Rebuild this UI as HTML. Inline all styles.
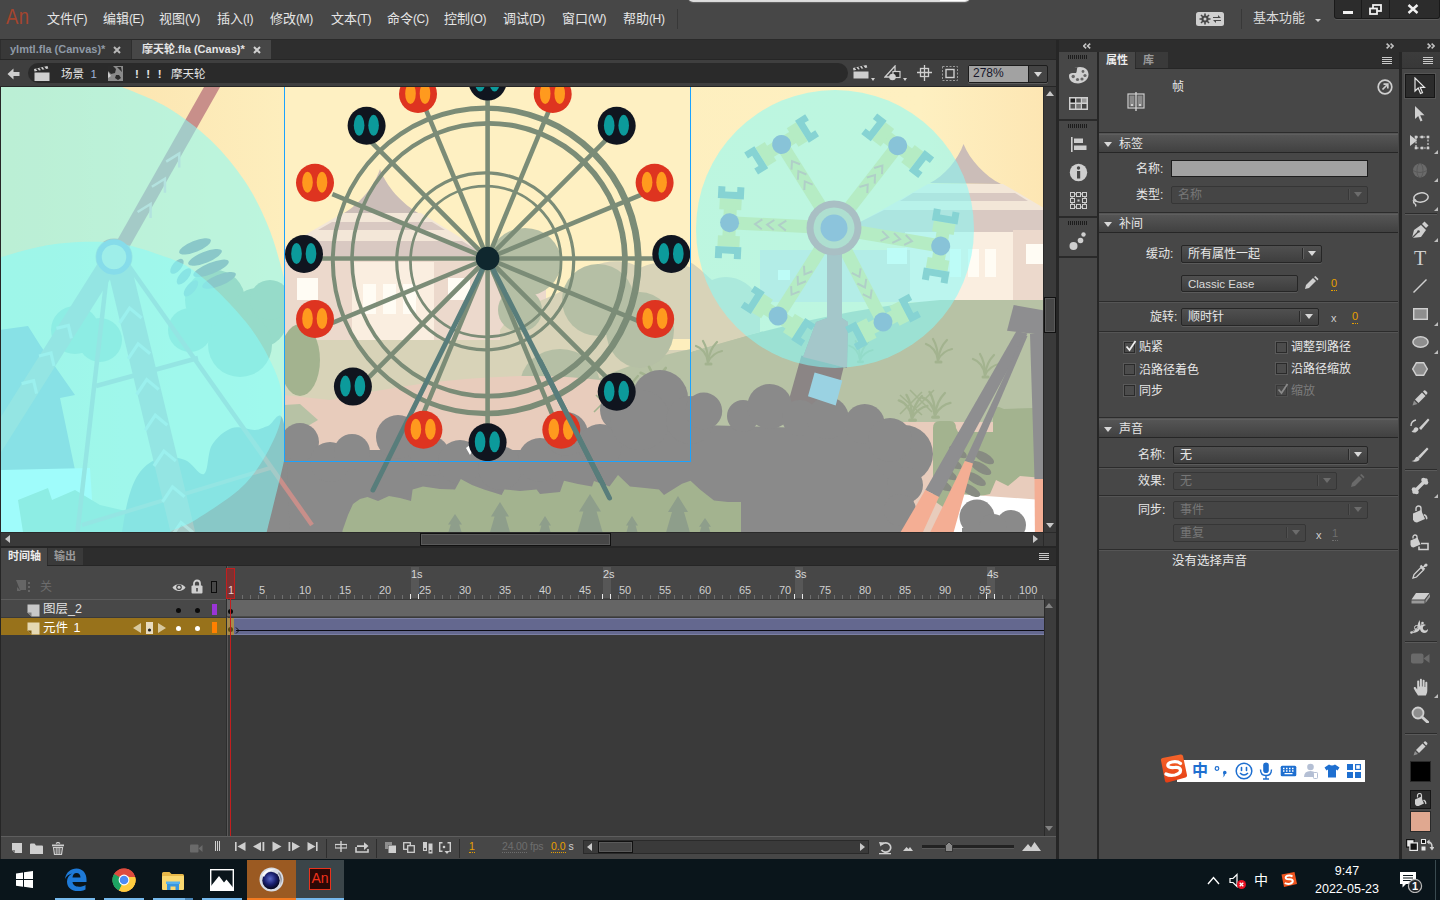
<!DOCTYPE html>
<html lang="zh-CN">
<head>
<meta charset="utf-8">
<title>Adobe Animate</title>
<style>
*{box-sizing:border-box;margin:0;padding:0}
html,body{width:1440px;height:900px;overflow:hidden;background:#2a2a2a}
body{font-family:"Liberation Sans","Noto Sans CJK SC",sans-serif;font-size:12px;color:#e0e0e0;position:relative}
.abs{position:absolute}
#app{position:absolute;left:0;top:0;width:1440px;height:900px;overflow:hidden;background:#262626}
/* menu bar */
#menubar{left:0;top:0;width:1440px;height:40px;background:#474747;border-bottom:1px solid #2a2a2a}
#menubar .mi{position:absolute;top:11px;font-size:13px;color:#e6e6e6;white-space:nowrap;line-height:16px}
#logo{position:absolute;left:6px;top:5px;font-size:21.5px;line-height:24px;color:#a5452e;letter-spacing:0.5px;transform:scaleX(0.86);transform-origin:0 0}
#menubar .mi .k{font-size:12px;letter-spacing:-0.4px}
/* doc tabs */
#tabbar{left:0;top:40px;width:1056px;height:20px;background:#2e2e2e;border-bottom:1px solid #262626}
.dtab{position:absolute;top:0;height:19px;font-size:11px;line-height:19px;font-weight:bold;white-space:nowrap}
/* edit bar */
#editbar{left:0;top:60px;width:1056px;height:27px;background:#3f3f3f;border-bottom:1px solid #262626}
#crumb{position:absolute;left:28px;top:3px;width:820px;height:20px;border-radius:10px;background:#2a2a2a}
/* stage */
#stage{left:1px;top:87px;width:1042px;height:445px;overflow:hidden;background:#fdeebd}
/* generic panel */
.panel{background:#474747}
.sect{position:absolute;left:0;width:299px;height:19px;background:linear-gradient(#555,#414141);border-top:1px solid #5e5e5e;border-bottom:1px solid #262626}
.lbl{position:absolute;white-space:nowrap;font-size:12px;line-height:14px;color:#e6e6e6}
.dim{color:#7c7c7c}
.dd{position:absolute;height:17px;border:1px solid #262626;border-radius:2px;background:linear-gradient(#505050,#3e3e3e);box-shadow:0 1px 0 #5a5a5a}
.dd.off{background:#454545;border-color:#363636;box-shadow:none}
.dd .t{position:absolute;left:6px;top:1px;font-size:12px;line-height:15px;color:#e8e8e8;white-space:nowrap}
.dd.off .t{color:#777}
.dd .sep{position:absolute;right:18px;top:2px;width:1px;height:11px;background:#2a2a2a;box-shadow:1px 0 0 #606060}
.dd .ar{position:absolute;right:5px;top:5px;width:0;height:0;border-left:4px solid transparent;border-right:4px solid transparent;border-top:5px solid #d8d8d8}
.dd.off .ar{border-top-color:#6c6c6c}
.dd.off .sep{background:#383838;box-shadow:1px 0 0 #505050}
.cb{position:absolute;width:11px;height:11px;border:1px solid #2a2a2a;background:#4c4c4c;box-shadow:0 0 0 1px #5a5a5a}
.hline{position:absolute;left:0;width:299px;height:2px;background:#2c2c2c;border-bottom:1px solid #555}
.tri-u{width:0;height:0;border-left:4px solid transparent;border-right:4px solid transparent;border-bottom:5px solid #c8c8c8}
.tri-d{width:0;height:0;border-left:4px solid transparent;border-right:4px solid transparent;border-top:5px solid #c8c8c8}
.tri-l{width:0;height:0;border-top:4px solid transparent;border-bottom:4px solid transparent;border-right:5px solid #c8c8c8}
.tri-r{width:0;height:0;border-top:4px solid transparent;border-bottom:4px solid transparent;border-left:5px solid #c8c8c8}
.menuic{width:10px;height:7px;background:linear-gradient(#c8c8c8 0 1px,transparent 1px 2px,#c8c8c8 2px 3px,transparent 3px 4px,#c8c8c8 4px 5px,transparent 5px 6px,#c8c8c8 6px 7px)}

</style>
</head>
<body>
<div id="app">

<!-- MENUBAR -->
<div id="menubar" class="abs">
  <div id="logo">An</div>
  <div class="mi" style="left:47px">文件<span class="k">(F)</span></div>
  <div class="mi" style="left:103px">编辑<span class="k">(E)</span></div>
  <div class="mi" style="left:159px">视图<span class="k">(V)</span></div>
  <div class="mi" style="left:217px">插入<span class="k">(I)</span></div>
  <div class="mi" style="left:270px">修改<span class="k">(M)</span></div>
  <div class="mi" style="left:331px">文本<span class="k">(T)</span></div>
  <div class="mi" style="left:387px">命令<span class="k">(C)</span></div>
  <div class="mi" style="left:444px">控制<span class="k">(O)</span></div>
  <div class="mi" style="left:503px">调试<span class="k">(D)</span></div>
  <div class="mi" style="left:562px">窗口<span class="k">(W)</span></div>
  <div class="mi" style="left:623px">帮助<span class="k">(H)</span></div>
  <div class="abs" style="left:677px;top:9px;width:1px;height:20px;background:#383838"></div>
<div class="abs" style="left:688px;top:-8px;width:282px;height:10px;background:linear-gradient(#fff,#d8d8d8);border-radius:0 0 5px 5px;box-shadow:0 1px 1px #666"></div>
<div class="abs" style="left:940px;top:-8px;width:28px;height:9px;background:#fff;border-radius:0 0 4px 0"></div>
<svg class="abs" style="left:1196px;top:12px" width="28" height="14" viewBox="0 0 28 14"><rect x="0" y="0" width="28" height="14" rx="2.5" fill="#cfcfcf"/><circle cx="9" cy="7" r="3.6" fill="#474747"/><path d="M9,1.5v11M3.5,7h11M5,3l8,8M13,3l-8,8" stroke="#474747" stroke-width="1.6"/><circle cx="9" cy="7" r="1.5" fill="#cfcfcf"/><path d="M17,5h5v-2l3,3h-8z M25,9h-5v2l-3,-3h8z" fill="#474747"/></svg>
<div class="abs" style="left:1241px;top:9px;width:1px;height:20px;background:#383838"></div>
<div class="mi" style="left:1253px;top:10px;font-size:13px;color:#dcdcdc">基本功能</div>
<div class="abs" style="left:1315px;top:19px;width:0;height:0;border-left:3px solid transparent;border-right:3px solid transparent;border-top:3px solid #d0d0d0"></div>
<div class="abs" style="left:1334px;top:0;width:106px;height:19px;background:#2c2c2c;border:1px solid #1a1a1a;border-top:0;border-radius:0 0 3px 3px;box-shadow:0 1px 0 #5a5a5a"></div>
<div class="abs" style="left:1361px;top:0;width:1px;height:18px;background:#1a1a1a"></div><div class="abs" style="left:1389px;top:0;width:1px;height:18px;background:#1a1a1a"></div>
<div class="abs" style="left:1343px;top:11px;width:10px;height:3px;background:#f0f0f0"></div>
<svg class="abs" style="left:1369px;top:4px" width="13" height="11" viewBox="0 0 13 11"><rect x="4" y="1" width="8" height="6" fill="none" stroke="#f0f0f0" stroke-width="1.8"/><rect x="1" y="4.5" width="7" height="5.5" fill="#2c2c2c" stroke="#f0f0f0" stroke-width="1.8"/></svg>
<svg class="abs" style="left:1407px;top:4px" width="12" height="10" viewBox="0 0 12 10"><path d="M1.5,1l9,8M10.5,1l-9,8" stroke="#f0f0f0" stroke-width="2.4"/></svg>
</div>

<!-- DOC TABS -->
<div id="tabbar" class="abs">
  <div class="dtab" style="left:1px;width:130px;background:#383838;color:#8f9aa6;padding-left:9px">ylmtl.fla (Canvas)*</div>
  <div class="dtab" style="left:132px;width:139px;background:#474747;color:#e4e4e4;padding-left:10px">摩天轮.fla (Canvas)*</div>
  <svg class="abs" style="left:113px;top:6px" width="8" height="8" viewBox="0 0 8 8"><path d="M1,1l6,6M7,1l-6,6" stroke="#b8b8b8" stroke-width="2"/></svg>
<svg class="abs" style="left:253px;top:6px" width="8" height="8" viewBox="0 0 8 8"><path d="M1,1l6,6M7,1l-6,6" stroke="#d0d0d0" stroke-width="2"/></svg>
</div>

<!-- EDIT BAR -->
<div id="editbar" class="abs">
  <div id="crumb"></div>
  <svg class="abs" style="left:7px;top:8px" width="13" height="12" viewBox="0 0 13 12"><path d="M0.500,6l6,-5.500v3.500h6v4h-6v3.500z" fill="#cfcfcf"/></svg>
<svg class="abs" style="left:34px;top:6px" width="16" height="16" viewBox="0 0 16 16"><path d="M0.500,6.500h15v8.500h-15z" fill="#cfcfcf"/><path d="M0.500,5.500l-0.500,-2.500l13.500,-3l0.800,2.500z" fill="#cfcfcf"/><path d="M2.500,2.500l2,2.500M6,1.800l2,2.500M9.500,1l2,2.500" stroke="#2b2b2b" stroke-width="1.600"/></svg>
<div class="lbl" style="left:61px;top:7px;font-size:11.500px;color:#e6e6e6">场景&nbsp;&nbsp;<span style="color:#9fb4d8">1</span></div>
<svg class="abs" style="left:108px;top:6px" width="15" height="15" viewBox="0 0 15 15"><rect x="0" y="0" width="15" height="15" fill="#8a8a8a"/><path d="M0,0h5l3,3l-1,4l-4,1l-3,-3z" fill="#2b2b2b"/><path d="M9,1l5,5l-1,-5z M8,9l3,0l2,3l-3,2l-3,-2z" fill="#2b2b2b"/><path d="M0,6l3,4l-3,2z" fill="#cfcfcf"/></svg>
<div class="lbl" style="left:135px;top:7px;font-size:11.500px;color:#e6e6e6;letter-spacing:7.500px;font-weight:bold">!!!</div>
<div class="lbl" style="left:171px;top:7px;font-size:11.500px;color:#e6e6e6">摩天轮</div>
<svg class="abs" style="left:853px;top:5px" width="17" height="14" viewBox="0 0 17 14"><path d="M0.500,6.500h15v7h-15z" fill="#cfcfcf"/><path d="M0.500,5.500l-0.500,-2.500l13.500,-3l0.800,2.500z" fill="#cfcfcf"/><path d="M2.500,2.500l2,2.500M6,1.800l2,2.500M9.500,1l2,2.500" stroke="#2b2b2b" stroke-width="1.600"/></svg>
<div class="abs" style="left:871px;top:18px;width:0;height:0;border-left:2.500px solid transparent;border-right:2.500px solid transparent;border-top:3px solid #d0d0d0"></div>
<svg class="abs" style="left:884px;top:5px" width="19" height="16" viewBox="0 0 19 16"><path d="M1,12l10,-11v11z" fill="none" stroke="#cfcfcf" stroke-width="1.300"/><rect x="9" y="6.500" width="7" height="6" fill="#2b2b2b" stroke="#cfcfcf" stroke-width="1.200"/><circle cx="8.500" cy="12" r="3.300" fill="#cfcfcf"/></svg>
<div class="abs" style="left:903px;top:18px;width:0;height:0;border-left:2.500px solid transparent;border-right:2.500px solid transparent;border-top:3px solid #d0d0d0"></div>
<svg class="abs" style="left:917px;top:5px" width="15" height="16" viewBox="0 0 15 16"><path d="M7.500,0v16M0,7.500h15" stroke="#cfcfcf" stroke-width="1.300"/><rect x="3.500" y="3.500" width="8" height="8" fill="none" stroke="#cfcfcf" stroke-width="1.300"/></svg>
<svg class="abs" style="left:942px;top:6px" width="16" height="15" viewBox="0 0 16 15"><rect x="0.500" y="0.500" width="15" height="14" fill="none" stroke="#9a9a9a" stroke-width="1" stroke-dasharray="2 1.500"/><rect x="4" y="3.500" width="8" height="8" fill="none" stroke="#cfcfcf" stroke-width="1.400"/></svg>
<div class="abs" style="left:968px;top:5px;width:80px;height:18px;border:1px solid #1c1c1c;border-radius:2px;background:#444;box-shadow:0 1px 0 #5c5c5c"></div>
<div class="abs" style="left:969px;top:6px;width:59px;height:16px;background:#a2a2a2;color:#16162a;font-size:12px;line-height:15px;padding-left:4px">278%</div>
<div class="abs" style="left:1028px;top:6px;width:1px;height:16px;background:#1c1c1c"></div>
<div class="abs tri-d" style="left:1034px;top:12px;border-top-color:#d8d8d8"></div>
</div>

<!-- STAGE -->
<div id="stage" class="abs">
<svg width="1042" height="445" viewBox="1 87 1042 445" style="display:block">
<defs>
<linearGradient id="bgL" x1="0" x2="1"><stop offset="0" stop-color="#fbdfa8"/><stop offset="0.27" stop-color="#fdeebd"/><stop offset="0.88" stop-color="#fef0c1"/><stop offset="1" stop-color="#fde6b3"/></linearGradient>
<clipPath id="symclip"><rect x="284.5" y="80" width="406" height="381.5"/></clipPath>
<clipPath id="circC"><circle cx="835" cy="229" r="139"/></clipPath>
<clipPath id="stageclip"><rect x="1" y="87" width="1042" height="445"/></clipPath>




</defs>
<rect x="0" y="80" width="1045" height="460" fill="url(#bgL)" />
<path d="M963.5,144 C958,160 944,176 930,183 L1001,184 C985,176 970,160 963.5,144Z" fill="#cbbdb8" />
<path d="M928,184 L1003,184 L1044,208 L1044,236 L850,236 L850,228 Z" fill="#f3e7d8" />
<path d="M913,193 L1015,193 L1028,201 L900,201Z" fill="#d9c9c2" />
<path d="M884,210 L1044,210 L1044,232 C990,237 900,236 850,227 Z" fill="#d9c9c2" />
<rect x="905" y="232" width="108" height="70" fill="#faeee0" />
<rect x="1013" y="230" width="31" height="72" fill="#ecd9cc" />
<rect x="760" y="250" width="150" height="52" fill="#e9dcd0" />
<rect x="950" y="249" width="11" height="28" fill="#fffcf4" />
<rect x="968" y="249" width="11" height="28" fill="#fffcf4" />
<rect x="985" y="249" width="11" height="28" fill="#fffcf4" />
<rect x="1026" y="244" width="18" height="20" fill="#fffcf4" />
<rect x="887" y="248" width="20" height="16" fill="#fffcf4" />
<rect x="778" y="270" width="12" height="10" fill="#fffcf4" />
<path d="M690,352 C760,330 860,306 940,300 L1044,300 L1044,540 L690,540Z" fill="#b7c2a5" />
<path d="M690,262 C700,268 706,275 712,280 C730,272 750,280 760,300 L760,332 L690,352Z" fill="#d8d3b8" />
<g transform="translate(708,362) scale(1.0)" fill="none" stroke="#a3b38f" stroke-width="2.2" stroke-linecap="round"><path d="M0,0 C-1,-8 -6,-14 -12,-16"/><path d="M0,0 C0,-10 -2,-16 -5,-21"/><path d="M0,0 C1,-9 5,-16 9,-20"/><path d="M0,0 C3,-6 9,-10 14,-11"/><path d="M-2,2 L3,2" stroke-width="3"/></g>
<g transform="translate(938,360) scale(1.0)" fill="none" stroke="#a3b38f" stroke-width="2.2" stroke-linecap="round"><path d="M0,0 C-1,-8 -6,-14 -12,-16"/><path d="M0,0 C0,-10 -2,-16 -5,-21"/><path d="M0,0 C1,-9 5,-16 9,-20"/><path d="M0,0 C3,-6 9,-10 14,-11"/><path d="M-2,2 L3,2" stroke-width="3"/></g>
<g transform="translate(985,375) scale(1.0)" fill="none" stroke="#a3b38f" stroke-width="2.2" stroke-linecap="round"><path d="M0,0 C-1,-8 -6,-14 -12,-16"/><path d="M0,0 C0,-10 -2,-16 -5,-21"/><path d="M0,0 C1,-9 5,-16 9,-20"/><path d="M0,0 C3,-6 9,-10 14,-11"/><path d="M-2,2 L3,2" stroke-width="3"/></g>
<g transform="translate(912,418) scale(1.1)" fill="none" stroke="#a3b38f" stroke-width="2.2" stroke-linecap="round"><path d="M0,0 C-1,-8 -6,-14 -12,-16"/><path d="M0,0 C0,-10 -2,-16 -5,-21"/><path d="M0,0 C1,-9 5,-16 9,-20"/><path d="M0,0 C3,-6 9,-10 14,-11"/><path d="M-2,2 L3,2" stroke-width="3"/></g>
<g transform="translate(935,415) scale(1.1)" fill="none" stroke="#a3b38f" stroke-width="2.2" stroke-linecap="round"><path d="M0,0 C-1,-8 -6,-14 -12,-16"/><path d="M0,0 C0,-10 -2,-16 -5,-21"/><path d="M0,0 C1,-9 5,-16 9,-20"/><path d="M0,0 C3,-6 9,-10 14,-11"/><path d="M-2,2 L3,2" stroke-width="3"/></g>
<g transform="translate(860,360) scale(0.9)" fill="none" stroke="#a3b38f" stroke-width="2.2" stroke-linecap="round"><path d="M0,0 C-1,-8 -6,-14 -12,-16"/><path d="M0,0 C0,-10 -2,-16 -5,-21"/><path d="M0,0 C1,-9 5,-16 9,-20"/><path d="M0,0 C3,-6 9,-10 14,-11"/><path d="M-2,2 L3,2" stroke-width="3"/></g>
<path d="M900,395 l22,20 M910,390 l22,22 M922,392 l-22,22 M934,390 l-24,24" stroke="#a3b38f" stroke-width="1.6" fill="none"/>
<path d="M880,422 L1044,422 L1044,545 L900,545Z" fill="#e8ccbc" />
<path d="M933,500 L933,428 Q933,421 940,421 L950,421 Q956,421 956,428 L958,432 L993,432 L993,412 Q993,407 999,407 L1004,409 L1034,408 L1044,408 L1044,478 L1020,476 L1008,486 L996,480 L990,494 L962,500 L950,512Z" fill="#a3b38f" />
<path d="M958,494 L1044,500 L1044,545 L950,545Z" fill="#ffffff" />
<ellipse cx="983.8" cy="457.3" rx="11.5" ry="4.6" fill="#878b82" transform="rotate(30 983.8 457.3)"/>
<ellipse cx="981" cy="468" rx="11.5" ry="4.6" fill="#878b82" transform="rotate(30 981 468)"/>
<ellipse cx="975.6" cy="479" rx="11.5" ry="4.6" fill="#878b82" transform="rotate(30 975.6 479)"/>
<ellipse cx="970" cy="490" rx="11.5" ry="4.6" fill="#878b82" transform="rotate(30 970 490)"/>
<ellipse cx="958" cy="452" rx="10" ry="4.2" fill="#878b82" transform="rotate(30 958 452)"/>
<ellipse cx="953" cy="463" rx="10" ry="4.2" fill="#878b82" transform="rotate(30 953 463)"/>
<ellipse cx="948" cy="474" rx="10" ry="4.2" fill="#878b82" transform="rotate(30 948 474)"/>
<ellipse cx="943" cy="485" rx="10" ry="4.2" fill="#878b82" transform="rotate(30 943 485)"/>
<circle cx="977" cy="517" r="17.5" fill="#8a8a8a" />
<circle cx="1011" cy="525" r="15" fill="#8a8a8a" />
<circle cx="993" cy="528" r="14" fill="#8a8a8a" />
<rect x="962" y="528" width="62" height="20" fill="#8a8a8a" />
<path d="M801.4,355.4 L843.6,367.3 L831.7,416.0 L788.0,403.0Z" fill="#8b8585" />
<path d="M827.0,250.0 L842.0,250.0 L842.0,318.0 L848.0,322.0 L847.0,368.0 L803.0,357.0 L816.0,322.0 L827.0,318.0Z" fill="#8b8585" />
<path d="M284,440 L320,450 L600,450 L640,430 L700,425 L880,430 L912,470 L917,490 L900,545 L284,545Z" fill="#8a8a8a"/><circle cx="300" cy="442" r="19" fill="#8a8a8a"/><circle cx="330" cy="462" r="20" fill="#8a8a8a"/><circle cx="352" cy="452" r="18" fill="#8a8a8a"/><circle cx="398" cy="437" r="22" fill="#8a8a8a"/><circle cx="430" cy="456" r="20" fill="#8a8a8a"/><circle cx="460" cy="462" r="22" fill="#8a8a8a"/><circle cx="500" cy="468" r="22" fill="#8a8a8a"/><circle cx="540" cy="460" r="22" fill="#8a8a8a"/><circle cx="566" cy="434" r="22" fill="#8a8a8a"/><circle cx="600" cy="446" r="22" fill="#8a8a8a"/><circle cx="622" cy="410" r="22" fill="#8a8a8a"/><circle cx="660" cy="398" r="28" fill="#8a8a8a"/><circle cx="640" cy="420" r="30" fill="#8a8a8a"/><circle cx="690" cy="420" r="24" fill="#8a8a8a"/><circle cx="703.7" cy="411" r="18.5" fill="#8a8a8a"/><circle cx="743" cy="416" r="16" fill="#8a8a8a"/><circle cx="769.7" cy="406.5" r="22.5" fill="#8a8a8a"/><circle cx="800" cy="418" r="18" fill="#8a8a8a"/><circle cx="827.8" cy="418" r="21" fill="#8a8a8a"/><circle cx="864.7" cy="424" r="20" fill="#8a8a8a"/><circle cx="904" cy="454" r="29" fill="#8a8a8a"/><circle cx="890" cy="440" r="22" fill="#8a8a8a"/><circle cx="905" cy="485" r="18" fill="#8a8a8a"/><circle cx="900" cy="510" r="16" fill="#8a8a8a"/>
<path d="M1013.7,305.0 L1044.0,310.4 L1044.0,335.0 L1007.0,330.8Z" fill="#8e8e90" />
<path d="M1016.5,331.0 L1027.5,333.5 L939.0,497.0 L925.3,490.0Z" fill="#8e8e90" />
<path d="M925.3,490.0 L939.0,497.0 L917.0,545.0 L893.0,545.0Z" fill="#f4ae94" />
<path d="M1023.5,335.0 L1027.5,336.0 L973.0,463.5 L964.8,461.0Z" fill="#8e8e90" />
<path d="M964.8,461.0 L973.0,463.5 L950.0,545.0 L924.0,545.0Z" fill="#f4ae94" />
<path d="M1030.0,334.0 L1044.0,334.0 L1044.0,479.0 L1034.5,479.0Z" fill="#8e8e90" />
<path d="M1034.5,479.0 L1044.0,479.0 L1044.0,545.0 L1035.0,545.0Z" fill="#f4ae94" />
<g clip-path="url(#stageclip)">
<path d="M0.0,330.0 L28.0,326.0 L40.0,345.0 L75.0,395.0 L60.0,398.0 L75.0,470.0 L0.0,470.0Z" fill="#8c7a99" />
<path d="M0.0,470.0 L90.0,468.0 L95.0,545.0 L0.0,545.0Z" fill="#ffffff" />
<path d="M18.0,500.0 L48.0,488.0 L52.0,500.0 L75.0,490.0 L100.0,505.0 L130.0,512.0 L135.0,545.0 L25.0,545.0Z" fill="#a8b48e" />
<circle cx="75" cy="330" r="24" fill="#a8b48e" />
<circle cx="100" cy="340" r="22" fill="#a8b48e" />
<circle cx="215" cy="300" r="30" fill="#a8b48e" />
<circle cx="258" cy="318" r="30" fill="#a8b48e" />
<circle cx="190" cy="330" r="22" fill="#a8b48e" />
<circle cx="240" cy="345" r="32" fill="#a8b48e" />
<circle cx="270" cy="300" r="20" fill="#a8b48e" />
<path d="M120.0,545.0 C121.3,537.5 124.7,512.2 128.0,500.0 C131.3,487.8 134.7,479.0 140.0,472.0 C145.3,465.0 152.5,460.0 160.0,458.0 C167.5,456.0 177.7,457.3 185.0,460.0 C192.3,462.7 199.5,476.5 204.0,474.0 C208.5,471.5 207.3,452.7 212.0,445.0 C216.7,437.3 224.8,430.5 232.0,428.0 C239.2,425.5 249.0,430.3 255.0,430.0 C261.0,429.7 263.2,427.0 268.0,426.0 C272.8,425.0 280.3,404.2 284.0,424.0 C287.7,443.8 289.0,524.8 290.0,545.0Z" fill="#8a8a8a" />
<ellipse cx="194" cy="245" rx="17" ry="5.5" fill="#8e8a8e" transform="rotate(-22 198 243)"/>
<ellipse cx="204" cy="256" rx="18" ry="5.5" fill="#8e8a8e" transform="rotate(-22 208 254)"/>
<ellipse cx="210" cy="267" rx="19" ry="5.5" fill="#8e8a8e" transform="rotate(-22 214 265)"/>
<ellipse cx="218" cy="279" rx="18" ry="5.5" fill="#8e8a8e" transform="rotate(-22 222 277)"/>
<ellipse cx="174" cy="264" rx="9" ry="4.5" fill="#8e8a8e" transform="rotate(-50 178 262)"/>
<ellipse cx="181" cy="274" rx="10" ry="4.5" fill="#8e8a8e" transform="rotate(-50 185 272)"/>
<ellipse cx="188" cy="286" rx="10" ry="4.5" fill="#8e8a8e" transform="rotate(-50 192 284)"/>
<g stroke="#c88f8a" fill="none" stroke-linecap="butt">
<line x1="216" y1="80" x2="114" y2="260" stroke-width="14"/>
<line x1="108" y1="265" x2="76" y2="545" stroke-width="4.5"/>
<line x1="126" y1="262" x2="312" y2="525" stroke-width="4.5"/>
<line x1="96" y1="386" x2="198" y2="358" stroke-width="4.5"/>
<line x1="82" y1="525" x2="270" y2="468" stroke-width="4"/>
<line x1="120" y1="270" x2="186" y2="545" stroke-width="24"/>
<line x1="106" y1="268" x2="-10" y2="452" stroke-width="19"/>
</g>
<circle cx="114" cy="257" r="15.5" fill="#e8b8b0" stroke="#c88f8a" stroke-width="6"/>
<g stroke="#e8c4be" stroke-width="3.2" fill="none">
<path d="M119.6,323.0 L129.6,308.0 L141.6,318.0"/>
<path d="M128.1,358.8 L138.1,343.8 L150.1,353.8"/>
<path d="M136.7,394.5 L146.7,379.5 L158.7,389.5"/>
<path d="M145.3,430.2 L155.3,415.2 L167.3,425.2"/>
<path d="M153.9,466.0 L163.9,451.0 L175.9,461.0"/>
<path d="M162.5,501.8 L172.5,486.8 L184.5,496.8"/>
<path d="M171.0,537.5 L181.0,522.5 L193.0,532.5"/>
<path d="M56.4,328.4 L68.4,325.4 L71.4,338.4"/>
<path d="M39.0,356.0 L51.0,353.0 L54.0,366.0"/>
<path d="M21.6,383.6 L33.6,380.6 L36.6,393.6"/>
<path d="M166.2,161.6 L179.2,153.6 L179.2,167.6" stroke-width="2.5"/>
<path d="M151.9,186.8 L164.9,178.8 L164.9,192.8" stroke-width="2.5"/>
<path d="M137.6,212.0 L150.6,204.0 L150.6,218.0" stroke-width="2.5"/>
</g>
<path d="M-5,80 L110,80 L122.0,87.0 C129.4,90.3 151.9,98.1 166.7,107.0 C181.5,115.9 198.1,128.2 211.0,140.5 C223.9,152.8 235.1,166.8 244.4,180.5 C253.7,194.2 260.8,209.1 266.7,222.8 C272.6,236.5 276.4,249.9 280.0,262.8 C283.6,275.7 286.0,285.5 288.0,300.0 C290.0,314.5 291.5,330.0 292.0,350.0 C292.5,370.0 292.3,401.5 291.0,420.0 C289.7,438.5 288.0,442.5 284.0,461.0 C280.0,479.5 269.8,519.3 267.0,531.0 L262,545 L-5,545Z" fill="#86fbfa" fill-opacity="0.55"/>
<path d="M-5.0,259.0 C0.8,257.3 18.3,251.7 30.0,249.0 C41.7,246.3 50.8,244.0 65.0,243.0 C79.2,242.0 99.2,241.0 115.0,243.0 C130.8,245.0 146.3,250.0 160.0,255.0 C173.7,260.0 182.7,261.8 197.0,273.0 C211.3,284.2 233.0,305.7 246.0,322.0 C259.0,338.3 269.0,357.3 275.0,371.0 C281.0,384.7 282.0,393.0 282.0,404.0 C282.0,415.0 281.0,423.8 275.0,437.0 C269.0,450.2 259.0,469.3 246.0,483.0 C233.0,496.7 209.7,510.8 197.0,519.0 C184.3,527.2 176.2,527.7 170.0,532.0 C163.8,536.3 161.7,542.8 160.0,545.0 L-5,545Z" fill="#86fbfa" fill-opacity="0.55"/>
<circle cx="114" cy="257" r="15" fill="#9eeee9" stroke="#86dcea" stroke-width="5.5"/>
</g>
<circle cx="835" cy="229" r="139" fill="#86fbfa" fill-opacity="0.55"/>
<g stroke="#b5ecc4" stroke-width="13" fill="none">
<line x1="834" y1="228" x2="781.6" y2="144.4"/>
<line x1="834" y1="228" x2="897.7" y2="145.7"/>
<line x1="834" y1="228" x2="729.6" y2="222.7"/>
<line x1="834" y1="228" x2="940.7" y2="246"/>
<line x1="834" y1="228" x2="778" y2="316"/>
<line x1="834" y1="228" x2="883" y2="322"/>
</g>
<g stroke="#b0cfc8" stroke-width="2" fill="none">
<path d="M812.7,184.7 L804.8,181.4 L804.3,190.0"/>
<path d="M806.4,174.5 L798.4,171.2 L797.9,179.8"/>
<path d="M800.0,164.3 L792.0,161.1 L791.5,169.6"/>
<path d="M867.3,193.1 L867.7,184.5 L859.4,187.0"/>
<path d="M874.7,183.6 L875.0,175.0 L866.8,177.5"/>
<path d="M882.0,174.1 L882.4,165.5 L874.1,168.0"/>
<path d="M786.3,220.6 L779.1,225.2 L785.8,230.6"/>
<path d="M774.3,220.0 L767.1,224.6 L773.8,230.0"/>
<path d="M762.3,219.4 L755.1,224.0 L761.8,229.3"/>
<path d="M880.5,240.9 L888.2,237.1 L882.2,231.1"/>
<path d="M892.3,242.9 L900.1,239.1 L894.0,233.1"/>
<path d="M904.2,244.9 L911.9,241.1 L905.8,235.0"/>
<path d="M804.0,265.8 L804.5,274.4 L812.4,271.2"/>
<path d="M797.6,275.9 L798.0,284.5 L806.0,281.3"/>
<path d="M791.1,286.1 L791.6,294.6 L799.6,291.4"/>
<path d="M851.8,272.9 L859.4,276.8 L860.6,268.3"/>
<path d="M857.3,283.5 L865.0,287.4 L866.2,278.9"/>
<path d="M862.8,294.2 L870.5,298.1 L871.7,289.5"/>
</g>
<path d="M827.0,250.0 L842.0,250.0 L842.0,318.0 L848.0,322.0 L847.0,368.0 L803.0,357.0 L816.0,322.0 L827.0,318.0Z" fill="#a4c7ca" clip-path="url(#circC)"/>
<g transform="translate(781.6,144.4) rotate(-32.1)"><rect x="-20" y="-6.5" width="40" height="13" fill="#b5ecc4"/><rect x="13" y="-11" width="11" height="22" fill="#b5ecc4"/><rect x="-24" y="-11" width="11" height="22" fill="#b5ecc4"/><path d="M24,-13h12v7h-5v12h5v7h-12z M-24,-13h-12v7h5v12h-5v7h12z" fill="#86d3d3"/><circle r="9.500" fill="#88c3d8"/></g>
<g transform="translate(897.7,145.7) rotate(37.7)"><rect x="-20" y="-6.5" width="40" height="13" fill="#b5ecc4"/><rect x="13" y="-11" width="11" height="22" fill="#b5ecc4"/><rect x="-24" y="-11" width="11" height="22" fill="#b5ecc4"/><path d="M24,-13h12v7h-5v12h5v7h-12z M-24,-13h-12v7h5v12h-5v7h12z" fill="#86d3d3"/><circle r="9.500" fill="#88c3d8"/></g>
<g transform="translate(729.6,222.7) rotate(-87.1)"><rect x="-20" y="-6.5" width="40" height="13" fill="#b5ecc4"/><rect x="13" y="-11" width="11" height="22" fill="#b5ecc4"/><rect x="-24" y="-11" width="11" height="22" fill="#b5ecc4"/><path d="M24,-13h12v7h-5v12h5v7h-12z M-24,-13h-12v7h5v12h-5v7h12z" fill="#86d3d3"/><circle r="9.500" fill="#88c3d8"/></g>
<g transform="translate(940.7,246) rotate(99.6)"><rect x="-20" y="-6.5" width="40" height="13" fill="#b5ecc4"/><rect x="13" y="-11" width="11" height="22" fill="#b5ecc4"/><rect x="-24" y="-11" width="11" height="22" fill="#b5ecc4"/><path d="M24,-13h12v7h-5v12h5v7h-12z M-24,-13h-12v7h5v12h-5v7h12z" fill="#86d3d3"/><circle r="9.500" fill="#88c3d8"/></g>
<g transform="translate(778,316) rotate(212.5)"><rect x="-20" y="-6.5" width="40" height="13" fill="#b5ecc4"/><rect x="13" y="-11" width="11" height="22" fill="#b5ecc4"/><rect x="-24" y="-11" width="11" height="22" fill="#b5ecc4"/><path d="M24,-13h12v7h-5v12h5v7h-12z M-24,-13h-12v7h5v12h-5v7h12z" fill="#86d3d3"/><circle r="9.500" fill="#88c3d8"/></g>
<g transform="translate(883,322) rotate(152.5)"><rect x="-20" y="-6.5" width="40" height="13" fill="#b5ecc4"/><rect x="13" y="-11" width="11" height="22" fill="#b5ecc4"/><rect x="-24" y="-11" width="11" height="22" fill="#b5ecc4"/><path d="M24,-13h12v7h-5v12h5v7h-12z M-24,-13h-12v7h5v12h-5v7h12z" fill="#86d3d3"/><circle r="9.500" fill="#88c3d8"/></g>
<circle cx="834" cy="228" r="27.5" fill="#a9bfc4" />
<circle cx="834" cy="228" r="20.5" fill="#aedfd0" />
<circle cx="834" cy="228" r="13.5" fill="#8cc4dc" />
<rect x="0" y="0" width="0" height="0" fill="none" />
<path d="M814.6,372.6 L842.3,380.5 L835.7,405.5 L808.0,396.3Z" fill="#9ad2e2" />
<g clip-path="url(#symclip)">
<rect x="284.5" y="80" width="406" height="382" fill="#fef0c2" />
<path d="M380,169 C375,185 360,204 344,213 L420,214 C402,204 386,186 380,169Z" fill="#cbbdb8" />
<path d="M343,213 L421,213 L490,256 L284,256 L284,247 Z" fill="#f3e7d8" />
<path d="M332,222 L432,222 L445,230 L318,230Z" fill="#d9c9c2" />
<path d="M303,241 L462,241 L490,258 L284,258 L284,250Z" fill="#d9c9c2" />
<rect x="284" y="256" width="262" height="150" fill="#ecd9cc" />
<rect x="352" y="262" width="82" height="80" fill="#faeee0" />
<rect x="297" y="278" width="21" height="22" fill="#fffcf4" />
<rect x="448" y="278" width="22" height="22" fill="#fffcf4" />
<rect x="363" y="284" width="13" height="30" fill="#fffcf4" />
<rect x="383" y="284" width="13" height="30" fill="#fffcf4" />
<rect x="403" y="284" width="13" height="30" fill="#fffcf4" />
<path d="M284,340 L500,340 L500,330 C520,300 560,300 575,280 C590,262 620,255 640,268 C660,258 680,262 691,268 L691,420 L284,420Z" fill="#d8d3b8" />
<path d="M636,339 L691,339 L691,350 L636,350Z" fill="#fdeebd" />
<path d="M540,420 C570,385 630,362 691,349 L691,470 L540,470Z" fill="#b7c2a5" />
<ellipse cx="525" cy="262" rx="36" ry="34" fill="#b5bfa5" />
<ellipse cx="598" cy="300" rx="36" ry="36" fill="#b5bfa5" />
<ellipse cx="640" cy="330" rx="34" ry="38" fill="#b5bfa5" />
<ellipse cx="560" cy="385" rx="40" ry="36" fill="#b5bfa5" />
<ellipse cx="520" cy="310" rx="22" ry="22" fill="#b5bfa5" />
<ellipse cx="300" cy="360" rx="20" ry="36" fill="#a3b38f" />
<path d="M284,395 L330,400 C420,380 520,370 600,380 L620,470 L284,470Z" fill="#e8ccbc" />
<path d="M284,405 L300,404 L318,420 L284,440Z" fill="#b7c2a5" />
<g transform="translate(655,392) scale(1.2)" fill="none" stroke="#a3b38f" stroke-width="2.2" stroke-linecap="round"><path d="M0,0 C-1,-8 -6,-14 -12,-16"/><path d="M0,0 C0,-10 -2,-16 -5,-21"/><path d="M0,0 C1,-9 5,-16 9,-20"/><path d="M0,0 C3,-6 9,-10 14,-11"/><path d="M-2,2 L3,2" stroke-width="3"/></g><g transform="translate(628,398) scale(1.1)" fill="none" stroke="#a3b38f" stroke-width="2.2" stroke-linecap="round"><path d="M0,0 C-1,-8 -6,-14 -12,-16"/><path d="M0,0 C0,-10 -2,-16 -5,-21"/><path d="M0,0 C1,-9 5,-16 9,-20"/><path d="M0,0 C3,-6 9,-10 14,-11"/><path d="M-2,2 L3,2" stroke-width="3"/></g>
<path d="M596,395 l24,24 M606,390 l24,24 M618,388 l-24,24 M630,388 l-26,26 M640,392 l-24,24" stroke="#a3b38f" stroke-width="1.6" fill="none"/>
<path d="M284,440 L320,450 L600,450 L640,430 L700,425 L880,430 L912,470 L917,490 L900,545 L284,545Z" fill="#8a8a8a"/><circle cx="300" cy="442" r="19" fill="#8a8a8a"/><circle cx="330" cy="462" r="20" fill="#8a8a8a"/><circle cx="352" cy="452" r="18" fill="#8a8a8a"/><circle cx="398" cy="437" r="22" fill="#8a8a8a"/><circle cx="430" cy="456" r="20" fill="#8a8a8a"/><circle cx="460" cy="462" r="22" fill="#8a8a8a"/><circle cx="500" cy="468" r="22" fill="#8a8a8a"/><circle cx="540" cy="460" r="22" fill="#8a8a8a"/><circle cx="566" cy="434" r="22" fill="#8a8a8a"/><circle cx="600" cy="446" r="22" fill="#8a8a8a"/><circle cx="622" cy="410" r="22" fill="#8a8a8a"/><circle cx="660" cy="398" r="28" fill="#8a8a8a"/><circle cx="640" cy="420" r="30" fill="#8a8a8a"/><circle cx="690" cy="420" r="24" fill="#8a8a8a"/><circle cx="703.7" cy="411" r="18.5" fill="#8a8a8a"/><circle cx="743" cy="416" r="16" fill="#8a8a8a"/><circle cx="769.7" cy="406.5" r="22.5" fill="#8a8a8a"/><circle cx="800" cy="418" r="18" fill="#8a8a8a"/><circle cx="827.8" cy="418" r="21" fill="#8a8a8a"/><circle cx="864.7" cy="424" r="20" fill="#8a8a8a"/><circle cx="904" cy="454" r="29" fill="#8a8a8a"/><circle cx="890" cy="440" r="22" fill="#8a8a8a"/><circle cx="905" cy="485" r="18" fill="#8a8a8a"/><circle cx="900" cy="510" r="16" fill="#8a8a8a"/>
<path d="M466,448 L480,437 L470,455Z" fill="#ffffff" />
<path fill-rule="evenodd" fill="#7b8c77" d="M330.80,260.85a155.4,155.4 0 1 0 310.8,0a155.4,155.4 0 1 0 -310.8,0Z M334.80,260.85a150.0,150.0 0 1 0 300.0,0a150.0,150.0 0 1 0 -300.0,0Z"/>
<path fill-rule="evenodd" fill="#7b8c77" d="M350.20,259.75a138.8,138.8 0 1 0 277.6,0a138.8,138.8 0 1 0 -277.6,0Z M353.80,259.75a134.1,134.1 0 1 0 268.2,0a134.1,134.1 0 1 0 -268.2,0Z"/>
<g fill="none" stroke="#7b8c77">
<circle cx="485.2" cy="261.3" r="88.5" stroke-width="3.2"/><circle cx="485.75" cy="261.5" r="75.3" stroke-width="2.8"/>
<line x1="487.6" y1="258.5" x2="655.6" y2="258.5" stroke-width="4.6"/>
<line x1="487.6" y1="258.5" x2="642.8" y2="194.2" stroke-width="4.6"/>
<line x1="487.6" y1="258.5" x2="606.4" y2="139.7" stroke-width="4.6"/>
<line x1="487.6" y1="258.5" x2="551.9" y2="103.3" stroke-width="4.6"/>
<line x1="487.6" y1="258.5" x2="487.6" y2="90.5" stroke-width="4.6"/>
<line x1="487.6" y1="258.5" x2="423.3" y2="103.3" stroke-width="4.6"/>
<line x1="487.6" y1="258.5" x2="368.8" y2="139.7" stroke-width="4.6"/>
<line x1="487.6" y1="258.5" x2="332.4" y2="194.2" stroke-width="4.6"/>
<line x1="487.6" y1="258.5" x2="319.6" y2="258.5" stroke-width="4.6"/>
<line x1="487.6" y1="258.5" x2="332.4" y2="322.8" stroke-width="4.6"/>
<line x1="487.6" y1="258.5" x2="368.8" y2="377.3" stroke-width="4.6"/>
<line x1="487.6" y1="258.5" x2="423.3" y2="413.7" stroke-width="4.6"/>
<line x1="487.6" y1="258.5" x2="487.6" y2="426.5" stroke-width="4.6"/>
<line x1="487.6" y1="258.5" x2="551.9" y2="413.7" stroke-width="4.6"/>
<line x1="487.6" y1="258.5" x2="606.4" y2="377.3" stroke-width="4.6"/>
<line x1="487.6" y1="258.5" x2="642.8" y2="322.8" stroke-width="4.6"/>
</g>
</g>
<g stroke="#587d7b" stroke-width="5" stroke-linecap="round"><line x1="487.6" y1="258.5" x2="373" y2="490"/><line x1="487.6" y1="258.5" x2="609.5" y2="498"/></g>
<circle cx="487.6" cy="258.5" r="11.8" fill="#0f272e" />
<g transform="translate(671.3,254.0)"><circle r="19" fill="#10151f"/><ellipse cx="-7.5" cy="-0.5" rx="5.3" ry="10.5" fill="#0c9a9b"/><ellipse cx="7" cy="-0.5" rx="5.3" ry="10.5" fill="#0c9a9b"/></g>
<g transform="translate(654.6,182.7)"><circle r="19" fill="#de3420"/><ellipse cx="-7.5" cy="-0.5" rx="5.3" ry="10.5" fill="#ff9a1e"/><ellipse cx="7" cy="-0.5" rx="5.3" ry="10.5" fill="#ff9a1e"/></g>
<g transform="translate(616.7,125.8)"><circle r="19" fill="#10151f"/><ellipse cx="-7.5" cy="-0.5" rx="5.3" ry="10.5" fill="#0c9a9b"/><ellipse cx="7" cy="-0.5" rx="5.3" ry="10.5" fill="#0c9a9b"/></g>
<g transform="translate(552.7,94.0)"><circle r="19" fill="#de3420"/><ellipse cx="-7.5" cy="-0.5" rx="5.3" ry="10.5" fill="#ff9a1e"/><ellipse cx="7" cy="-0.5" rx="5.3" ry="10.5" fill="#ff9a1e"/></g>
<g transform="translate(487.6,81.6)"><circle r="19" fill="#10151f"/><ellipse cx="-7.5" cy="-0.5" rx="5.3" ry="10.5" fill="#0c9a9b"/><ellipse cx="7" cy="-0.5" rx="5.3" ry="10.5" fill="#0c9a9b"/></g>
<g transform="translate(418.0,94.0)"><circle r="19" fill="#de3420"/><ellipse cx="-7.5" cy="-0.5" rx="5.3" ry="10.5" fill="#ff9a1e"/><ellipse cx="7" cy="-0.5" rx="5.3" ry="10.5" fill="#ff9a1e"/></g>
<g transform="translate(366.6,125.8)"><circle r="19" fill="#10151f"/><ellipse cx="-7.5" cy="-0.5" rx="5.3" ry="10.5" fill="#0c9a9b"/><ellipse cx="7" cy="-0.5" rx="5.3" ry="10.5" fill="#0c9a9b"/></g>
<g transform="translate(315.0,182.7)"><circle r="19" fill="#de3420"/><ellipse cx="-7.5" cy="-0.5" rx="5.3" ry="10.5" fill="#ff9a1e"/><ellipse cx="7" cy="-0.5" rx="5.3" ry="10.5" fill="#ff9a1e"/></g>
<g transform="translate(304.0,254.0)"><circle r="19" fill="#10151f"/><ellipse cx="-7.5" cy="-0.5" rx="5.3" ry="10.5" fill="#0c9a9b"/><ellipse cx="7" cy="-0.5" rx="5.3" ry="10.5" fill="#0c9a9b"/></g>
<g transform="translate(315.0,319.0)"><circle r="19" fill="#de3420"/><ellipse cx="-7.5" cy="-0.5" rx="5.3" ry="10.5" fill="#ff9a1e"/><ellipse cx="7" cy="-0.5" rx="5.3" ry="10.5" fill="#ff9a1e"/></g>
<g transform="translate(352.9,386.6)"><circle r="19" fill="#10151f"/><ellipse cx="-7.5" cy="-0.5" rx="5.3" ry="10.5" fill="#0c9a9b"/><ellipse cx="7" cy="-0.5" rx="5.3" ry="10.5" fill="#0c9a9b"/></g>
<g transform="translate(423.4,429.7)"><circle r="19" fill="#de3420"/><ellipse cx="-7.5" cy="-0.5" rx="5.3" ry="10.5" fill="#ff9a1e"/><ellipse cx="7" cy="-0.5" rx="5.3" ry="10.5" fill="#ff9a1e"/></g>
<g transform="translate(487.6,442.3)"><circle r="19" fill="#10151f"/><ellipse cx="-7.5" cy="-0.5" rx="5.3" ry="10.5" fill="#0c9a9b"/><ellipse cx="7" cy="-0.5" rx="5.3" ry="10.5" fill="#0c9a9b"/></g>
<g transform="translate(561.3,429.7)"><circle r="19" fill="#de3420"/><ellipse cx="-7.5" cy="-0.5" rx="5.3" ry="10.5" fill="#ff9a1e"/><ellipse cx="7" cy="-0.5" rx="5.3" ry="10.5" fill="#ff9a1e"/></g>
<g transform="translate(616.7,391.8)"><circle r="19" fill="#10151f"/><ellipse cx="-7.5" cy="-0.5" rx="5.3" ry="10.5" fill="#0c9a9b"/><ellipse cx="7" cy="-0.5" rx="5.3" ry="10.5" fill="#0c9a9b"/></g>
<g transform="translate(655.2,319.0)"><circle r="19" fill="#de3420"/><ellipse cx="-7.5" cy="-0.5" rx="5.3" ry="10.5" fill="#ff9a1e"/><ellipse cx="7" cy="-0.5" rx="5.3" ry="10.5" fill="#ff9a1e"/></g>
<g stroke="#587d7b" stroke-width="5" stroke-linecap="round"><line x1="540" y1="361" x2="609.5" y2="498"/></g>
<rect x="284.5" y="80" width="406" height="381.5" fill="none" stroke="#1aa3ff" stroke-width="1"/>
<path d="M340.0,545.0 L342.7,530.0 L348.0,515.0 L353.0,504.0 L360.0,499.0 L367.5,497.0 L378.0,501.0 L389.0,496.0 L400.0,498.0 L411.0,501.0 L412.6,489.5 L423.0,486.6 L440.0,489.0 L455.0,489.5 L460.8,479.0 L472.0,485.0 L484.0,489.5 L501.6,495.0 L504.5,489.5 L520.0,491.0 L536.6,489.5 L540.0,494.0 L560.0,492.0 L564.0,480.8 L578.0,484.0 L592.0,486.6 L594.0,481.0 L609.5,486.6 L618.0,475.0 L630.0,486.6 L645.0,488.0 L659.0,489.5 L664.0,495.0 L682.0,483.7 L690.5,480.7 L700.0,489.5 L714.0,500.5 L728.0,502.0 L741.0,502.0 L741.0,545.0Z" fill="#a3b38f" />
<path d="M500,502 l9.0,14.4 l-3.6,0 l6.3,21.599999999999998 l-23.400000000000002,0 l6.3,-21.599999999999998 l-3.6,0Z" fill="#8e9e8b" />
<path d="M590,494 l11.0,17.6 l-4.4,0 l7.699999999999999,26.4 l-28.6,0 l7.699999999999999,-26.4 l-4.4,0Z" fill="#8e9e8b" />
<path d="M678,496 l10.0,16.0 l-4.0,0 l7.0,24.0 l-26.0,0 l7.0,-24.0 l-4.0,0Z" fill="#8e9e8b" />
<path d="M455,514 l7.0,10.4 l-2.8000000000000003,0 l4.8999999999999995,15.6 l-18.2,0 l4.8999999999999995,-15.6 l-2.8000000000000003,0Z" fill="#8e9e8b" />
<path d="M545,516 l6.0,9.600000000000001 l-2.4000000000000004,0 l4.199999999999999,14.399999999999999 l-15.600000000000001,0 l4.199999999999999,-14.399999999999999 l-2.4000000000000004,0Z" fill="#8e9e8b" />
<path d="M632,516 l6.0,9.600000000000001 l-2.4000000000000004,0 l4.199999999999999,14.399999999999999 l-15.600000000000001,0 l4.199999999999999,-14.399999999999999 l-2.4000000000000004,0Z" fill="#8e9e8b" />
<path d="M705,518 l6.0,8.8 l-2.4000000000000004,0 l4.199999999999999,13.2 l-15.600000000000001,0 l4.199999999999999,-13.2 l-2.4000000000000004,0Z" fill="#8e9e8b" />
<g stroke="#587d7b" stroke-width="5" stroke-linecap="round"><line x1="597" y1="473" x2="609.5" y2="498"/></g>
</svg>
</div>
<div class="abs" style="left:1043px;top:87px;width:13px;height:445px;background:#3a3a3a;border-left:1px solid #2a2a2a"></div>
<div class="abs" style="left:1044px;top:297px;width:12px;height:36px;background:#474747;border:1px solid #111;box-shadow:inset 0 0 0 1px #5a5a5a"></div>
<div class="abs tri-u" style="left:1046px;top:91px"></div><div class="abs tri-d" style="left:1046px;top:523px"></div>
<div class="abs" style="left:1px;top:532px;width:1055px;height:14px;background:#3a3a3a;border-top:1px solid #2a2a2a"></div>
<div class="abs" style="left:420px;top:533px;width:191px;height:13px;background:#474747;border:1px solid #111;box-shadow:inset 0 0 0 1px #5a5a5a"></div>
<div class="abs tri-l" style="left:5px;top:535px"></div><div class="abs tri-r" style="left:1033px;top:535px"></div>
<div class="abs" style="left:1043px;top:532px;width:13px;height:14px;background:#3a3a3a;border-left:1px solid #2a2a2a;border-top:1px solid #2a2a2a"></div>

<div id="tl" class="abs" style="left:1px;top:548px;width:1055px;height:311px;background:#474747">
<div class="abs" style="left:0;top:0;width:1055px;height:18px;background:#2d2d2d;border-bottom:1px solid #262626"></div>
<div class="abs" style="left:0;top:0;width:46px;height:18px;background:#474747;color:#ededed;font-size:11px;font-weight:bold;line-height:17px;padding-left:7px">时间轴</div>
<div class="abs" style="left:47px;top:0;width:35px;height:17px;background:#3a3a3a;color:#9a9a9a;font-size:11px;font-weight:bold;line-height:17px;padding-left:6px">输出</div>
<div class="abs menuic" style="left:1038px;top:5px"></div>
<div class="abs" style="left:0;top:51px;width:1055px;height:1px;background:#5c5c5c"></div>
<svg class="abs" style="left:14px;top:31px" width="18" height="16" viewBox="0 0 18 16"><path d="M1,1h10v10h-6z" fill="#666"/><path d="M1,7v5h5z" fill="#474747"/><path d="M2,8l4,4h-4z" fill="#666"/><rect x="13" y="3" width="2" height="2" fill="#666"/><rect x="13" y="7" width="2" height="2" fill="#666"/><rect x="13" y="11" width="2" height="2" fill="#666"/></svg>
<div class="lbl dim" style="left:39px;top:32px;color:#6c6c6c">关</div>
<svg class="abs" style="left:171px;top:34px" width="14" height="11" viewBox="0 0 14 11"><path d="M0.5,5.5 C3,1 11,1 13.5,5.5 C11,10 3,10 0.5,5.5Z" fill="#cfcfcf"/><circle cx="7" cy="5.3" r="2.8" fill="#474747"/><circle cx="7" cy="5.3" r="1.5" fill="#cfcfcf"/></svg>
<svg class="abs" style="left:190px;top:31px" width="12" height="15" viewBox="0 0 12 15"><path d="M3,7V4.5a3,3 0 0 1 6,0V7" fill="none" stroke="#cfcfcf" stroke-width="1.8"/><rect x="0.5" y="6.5" width="11" height="8" rx="1" fill="#cfcfcf"/><rect x="5.2" y="9" width="1.6" height="3.5" fill="#474747"/></svg>
<div class="abs" style="left:210px;top:33px;width:6px;height:12px;border:1.5px solid #0c0c0c"></div>
<div class="abs" style="left:0;top:52px;width:225px;height:18px;background:#484848;border-bottom:1px solid #3a3a3a"></div>
<div class="abs" style="left:0;top:70px;width:225px;height:18px;background:#98721b;border-bottom:1px solid #3a3a3a"></div>
<div class="abs" style="left:0;top:88px;width:225px;height:200px;background:#3a3a3a"></div>
<svg class="abs" style="left:25px;top:56px" width="14" height="13" viewBox="0 0 14 13"><path d="M1.5,0.500h12v12h-8l-4,-4z" fill="#c8c8c8"/><path d="M1.500,8.500h4v4z" fill="#7e7e7e"/></svg>
<svg class="abs" style="left:25px;top:74px" width="14" height="13" viewBox="0 0 14 13"><path d="M1.5,0.500h12v12h-8l-4,-4z" fill="#e4d8b4"/><path d="M1.500,8.500h4v4z" fill="#7a5a10"/></svg>
<div class="lbl" style="left:42px;top:54px;font-size:12.5px;color:#e4e4e4">图层_2</div>
<div class="lbl" style="left:42px;top:73px;font-size:12.5px;color:#fff">元件&nbsp;<span style="margin-left:2px">1</span></div>
<div class="abs" style="left:175px;top:60px;width:5px;height:5px;border-radius:3px;background:#0a0a0a"></div>
<div class="abs" style="left:175px;top:78px;width:5px;height:5px;border-radius:3px;background:#fff"></div>
<div class="abs" style="left:194px;top:60px;width:5px;height:5px;border-radius:3px;background:#0a0a0a"></div>
<div class="abs" style="left:194px;top:78px;width:5px;height:5px;border-radius:3px;background:#fff"></div>
<div class="abs" style="left:211px;top:56px;width:5px;height:11px;background:#9a35d6"></div>
<div class="abs" style="left:211px;top:74px;width:5px;height:11px;background:#ff8000"></div>
<svg class="abs" style="left:131px;top:74px" width="36" height="12" viewBox="0 0 36 12"><path d="M9,1v10l-8,-5z M26,1v10l8,-5z" fill="#d8c9a0"/><rect x="14" y="0" width="7" height="12" fill="#e8dcc0"/><circle cx="17.5" cy="8" r="1.6" fill="#222"/></svg>
<div class="abs" style="left:225px;top:18px;width:1px;height:293px;background:#2e2e2e"></div>
<div class="abs" style="left:226px;top:18px;width:1px;height:293px;background:#5a5a5a"></div>
<div class="abs" style="left:227px;top:51px;width:816px;height:237px;background:#3a3a3a"></div>
<div class="abs" style="left:410px;top:19px;width:8px;height:31px;background:#575757"></div>
<div class="lbl" style="left:410px;top:19px;font-size:11px;color:#d8d8d8">1s</div>
<div class="abs" style="left:602px;top:19px;width:8px;height:31px;background:#575757"></div>
<div class="lbl" style="left:602px;top:19px;font-size:11px;color:#d8d8d8">2s</div>
<div class="abs" style="left:794px;top:19px;width:8px;height:31px;background:#575757"></div>
<div class="lbl" style="left:794px;top:19px;font-size:11px;color:#d8d8d8">3s</div>
<div class="abs" style="left:986px;top:19px;width:8px;height:31px;background:#575757"></div>
<div class="lbl" style="left:986px;top:19px;font-size:11px;color:#d8d8d8">4s</div>
<svg class="abs" style="left:225px;top:44px" width="820" height="7" viewBox="0 0 820 7">
<path d="M8.5,3v4M16.5,3v4M24.5,3v4M32.5,3v4M40.5,3v4M48.5,3v4M56.5,3v4M64.5,3v4M72.5,3v4M80.5,3v4M88.5,3v4M96.5,3v4M104.5,3v4M112.5,3v4M120.5,3v4M128.5,3v4M136.5,3v4M144.5,3v4M152.5,3v4M160.5,3v4M168.5,3v4M176.5,3v4M184.5,3v4M192.5,3v4M200.5,3v4M208.5,3v4M216.5,3v4M224.5,3v4M232.5,3v4M240.5,3v4M248.5,3v4M256.5,3v4M264.5,3v4M272.5,3v4M280.5,3v4M288.5,3v4M296.5,3v4M304.5,3v4M312.5,3v4M320.5,3v4M328.5,3v4M336.5,3v4M344.5,3v4M352.5,3v4M360.5,3v4M368.5,3v4M376.5,3v4M384.5,3v4M392.5,3v4M400.5,3v4M408.5,3v4M416.5,3v4M424.5,3v4M432.5,3v4M440.5,3v4M448.5,3v4M456.5,3v4M464.5,3v4M472.5,3v4M480.5,3v4M488.5,3v4M496.5,3v4M504.5,3v4M512.5,3v4M520.5,3v4M528.5,3v4M536.5,3v4M544.5,3v4M552.5,3v4M560.5,3v4M568.5,3v4M576.5,3v4M584.5,3v4M592.5,3v4M600.5,3v4M608.5,3v4M616.5,3v4M624.5,3v4M632.5,3v4M640.5,3v4M648.5,3v4M656.5,3v4M664.5,3v4M672.5,3v4M680.5,3v4M688.5,3v4M696.5,3v4M704.5,3v4M712.5,3v4M720.5,3v4M728.5,3v4M736.5,3v4M744.5,3v4M752.5,3v4M760.5,3v4M768.5,3v4M776.5,3v4M784.5,3v4M792.5,3v4M800.5,3v4M808.5,3v4M816.5,3v4" stroke="#6e6e6e" stroke-width="1" fill="none"/>
<path d="M184.5,2v5M192.5,2v5M376.5,2v5M384.5,2v5M568.5,2v5M576.5,2v5M760.5,2v5M768.5,2v5" stroke="#e8e8e8" stroke-width="1" fill="none"/></svg>
<div class="lbl" style="left:258px;top:35px;font-size:11px;color:#d0d0d0">5</div>
<div class="lbl" style="left:298px;top:35px;font-size:11px;color:#d0d0d0">10</div>
<div class="lbl" style="left:338px;top:35px;font-size:11px;color:#d0d0d0">15</div>
<div class="lbl" style="left:378px;top:35px;font-size:11px;color:#d0d0d0">20</div>
<div class="lbl" style="left:418px;top:35px;font-size:11px;color:#d0d0d0">25</div>
<div class="lbl" style="left:458px;top:35px;font-size:11px;color:#d0d0d0">30</div>
<div class="lbl" style="left:498px;top:35px;font-size:11px;color:#d0d0d0">35</div>
<div class="lbl" style="left:538px;top:35px;font-size:11px;color:#d0d0d0">40</div>
<div class="lbl" style="left:578px;top:35px;font-size:11px;color:#d0d0d0">45</div>
<div class="lbl" style="left:618px;top:35px;font-size:11px;color:#d0d0d0">50</div>
<div class="lbl" style="left:658px;top:35px;font-size:11px;color:#d0d0d0">55</div>
<div class="lbl" style="left:698px;top:35px;font-size:11px;color:#d0d0d0">60</div>
<div class="lbl" style="left:738px;top:35px;font-size:11px;color:#d0d0d0">65</div>
<div class="lbl" style="left:778px;top:35px;font-size:11px;color:#d0d0d0">70</div>
<div class="lbl" style="left:818px;top:35px;font-size:11px;color:#d0d0d0">75</div>
<div class="lbl" style="left:858px;top:35px;font-size:11px;color:#d0d0d0">80</div>
<div class="lbl" style="left:898px;top:35px;font-size:11px;color:#d0d0d0">85</div>
<div class="lbl" style="left:938px;top:35px;font-size:11px;color:#d0d0d0">90</div>
<div class="lbl" style="left:978px;top:35px;font-size:11px;color:#d0d0d0">95</div>
<div class="lbl" style="left:1018px;top:35px;font-size:11px;color:#d0d0d0">100</div>
<div class="abs" style="left:226px;top:52px;width:817px;height:17px;background:#656565;border-bottom:1px solid #4a4a4a"></div>
<div class="abs" style="left:226px;top:70px;width:817px;height:17px;background:#64688f;border-top:1px solid #7c80a4;border-bottom:1px solid #7c80a4"></div>
<div class="abs" style="left:235px;top:82px;width:808px;height:1px;background:#0c0c14"></div>
<div class="abs" style="left:226px;top:70px;width:7px;height:17px;background:#a88c4c"></div>
<div class="abs" style="left:227px;top:61px;width:5px;height:5px;border-radius:3px;background:#0a0a0a"></div>
<div class="abs" style="left:227px;top:79px;width:5px;height:5px;border-radius:3px;background:#5a4a10"></div>
<svg class="abs" style="left:234px;top:79px" width="6" height="7" viewBox="0 0 6 7"><path d="M1,0.5l3,3l-3,3" fill="none" stroke="#111" stroke-width="1"/></svg>
<div class="abs" style="left:225px;top:20px;width:9px;height:31px;background:#7c3232;border:1px solid #c41e1e"></div>
<div class="lbl" style="left:227px;top:35px;font-size:11px;color:#e8d0d0">1</div>
<div class="abs" style="left:229px;top:51px;width:1px;height:237px;background:#c41e1e"></div>
<div class="abs" style="left:1043px;top:51px;width:12px;height:237px;background:#3c3c3c;border-left:1px solid #2a2a2a"></div>
<div class="abs tri-u" style="left:1044px;top:55px;opacity:.5"></div><div class="abs tri-d" style="left:1044px;top:278px;opacity:.5"></div>
<div class="abs" style="left:0;top:288px;width:1055px;height:1px;background:#5e5e5e"></div>
<div class="abs" style="left:0;top:289px;width:1055px;height:22px;background:#474747"></div>
<svg class="abs" style="left:10px;top:295px" width="11" height="11" viewBox="0 0 11 11"><path d="M1,0h10v10h-7l-3,-3z" fill="#cfcfcf"/><path d="M1,7h3v3z" fill="#7e7e7e"/></svg>
<svg class="abs" style="left:29px;top:295px" width="13" height="11" viewBox="0 0 13 11" ><path d="M0,11V1.5q0,-1 1,-1h3.5l1.5,2h6q1,0 1,1V11z" fill="#cfcfcf"/></svg>
<svg class="abs" style="left:51px;top:294px" width="12" height="13" viewBox="0 0 12 13" ><path d="M4,1.5q2,-2 4,0" fill="none" stroke="#cfcfcf" stroke-width="1.2"/><rect x="0" y="2.5" width="12" height="1.8" fill="#cfcfcf"/><path d="M1.5,5.5h9l-1,7h-7z" fill="none" stroke="#cfcfcf" stroke-width="1.2"/><path d="M4.2,6v6M6,6v6M7.8,6v6" stroke="#cfcfcf" stroke-width="1"/></svg>
<svg class="abs" style="left:189px;top:296px" width="13" height="9" viewBox="0 0 13 9" ><rect x="0" y="0.5" width="8.5" height="8" rx="1" fill="#6a6a6a"/><path d="M8.5,4.5l4,-3.5v7z" fill="#6a6a6a"/></svg>
<svg class="abs" style="left:214px;top:293px" width="6" height="10" viewBox="0 0 6 10" ><path d="M0.5,0v10M2.5,0v10M4.5,0v10" stroke="#cfcfcf" stroke-width="1"/></svg>
<svg class="abs" style="left:234px;top:294px" width="11" height="9" viewBox="0 0 11 9" ><rect x="0" y="0" width="1.6" height="9" fill="#cfcfcf"/><path d="M10.5,0v9l-8,-4.5z" fill="#cfcfcf"/></svg>
<svg class="abs" style="left:252px;top:294px" width="12" height="9" viewBox="0 0 12 9" ><path d="M8,0v9l-8,-4.5z" fill="#cfcfcf"/><rect x="9.5" y="0" width="1.8" height="9" fill="#cfcfcf"/></svg>
<svg class="abs" style="left:271px;top:293px" width="10" height="11" viewBox="0 0 10 11" ><path d="M0.5,0.5v10l9,-5z" fill="#cfcfcf"/></svg>
<svg class="abs" style="left:287px;top:294px" width="12" height="9" viewBox="0 0 12 9" ><rect x="0.5" y="0" width="1.8" height="9" fill="#cfcfcf"/><path d="M4,0v9l8,-4.5z" fill="#cfcfcf"/></svg>
<svg class="abs" style="left:306px;top:294px" width="11" height="9" viewBox="0 0 11 9" ><path d="M0.5,0v9l8,-4.5z" fill="#cfcfcf"/><rect x="9" y="0" width="1.6" height="9" fill="#cfcfcf"/></svg>
<div class="abs" style="left:325px;top:291px;width:1px;height:19px;background:#2e2e2e"></div>
<div class="abs" style="left:375px;top:291px;width:1px;height:19px;background:#2e2e2e"></div>
<div class="abs" style="left:458px;top:291px;width:1px;height:19px;background:#2e2e2e"></div>
<svg class="abs" style="left:334px;top:293px" width="12" height="11" viewBox="0 0 12 11" ><rect x="0" y="3.5" width="12" height="3.5" fill="none" stroke="#cfcfcf" stroke-width="1.2"/><path d="M6,0v11" stroke="#cfcfcf" stroke-width="1.4"/></svg>
<svg class="abs" style="left:354px;top:294px" width="14" height="11" viewBox="0 0 14 11" ><path d="M1,5v5h12v-3" fill="none" stroke="#cfcfcf" stroke-width="1.6"/><path d="M2,5.5h7v-3l4.5,3.8l-4.5,3.8v-3h-7z" fill="#cfcfcf" transform="translate(0,-2.2)"/></svg>
<svg class="abs" style="left:384px;top:294px" width="11" height="11" viewBox="0 0 11 11" ><rect x="3.5" y="3.5" width="7.5" height="7.5" fill="#cfcfcf"/><path d="M0,0h7v3h-4v4h-3z" fill="#8e8e8e"/></svg>
<svg class="abs" style="left:402px;top:294px" width="12" height="11" viewBox="0 0 12 11" ><rect x="0.7" y="0.7" width="6.6" height="6.6" fill="none" stroke="#cfcfcf" stroke-width="1.3"/><rect x="4.7" y="3.7" width="6.6" height="6.6" fill="#474747" stroke="#cfcfcf" stroke-width="1.3"/></svg>
<svg class="abs" style="left:422px;top:293px" width="10" height="13" viewBox="0 0 10 13" ><rect x="0" y="1" width="4" height="9" fill="#cfcfcf"/><rect x="5.5" y="2.5" width="4" height="10" fill="#cfcfcf"/><rect x="6.6" y="9" width="1.8" height="1.8" fill="#474747"/><rect x="1.1" y="7" width="1.8" height="1.8" fill="#474747"/></svg>
<svg class="abs" style="left:438px;top:294px" width="12" height="12" viewBox="0 0 12 12" ><path d="M3.5,0.7h-2.8v8.6h2.8M8.5,0.7h2.8v8.6h-1" fill="none" stroke="#cfcfcf" stroke-width="1.4"/><circle cx="5" cy="5" r="1.3" fill="#cfcfcf"/><path d="M5.5,9h5l-2.5,3z" fill="#cfcfcf"/></svg>
<div class="lbl" style="left:468px;top:292px;font-size:10.5px;color:#e8a000;border-bottom:1px dotted #e8a000;line-height:12px">1</div>
<div class="lbl" style="left:501px;top:292px;font-size:10.5px;color:#6e6e6e;letter-spacing:-0.2px;line-height:12px"><span style="border-bottom:1px dotted #6e6e6e">24.00</span> fps</div>
<div class="lbl" style="left:550px;top:292px;font-size:10.5px;color:#cfcfcf;line-height:12px"><span style="color:#e8a000;border-bottom:1px dotted #e8a000">0.0</span> s</div>
<div class="abs" style="left:582px;top:292px;width:286px;height:14px;background:#3a3a3a;border:1px solid #2a2a2a"></div>
<div class="abs" style="left:597px;top:293px;width:35px;height:12px;background:#474747;border:1px solid #111;box-shadow:inset 0 0 0 1px #5a5a5a"></div>
<div class="abs tri-l" style="left:586px;top:295px"></div><div class="abs tri-r" style="left:859px;top:295px"></div>
<svg class="abs" style="left:877px;top:292px" width="15" height="15" viewBox="0 0 15 15" ><path d="M4,4.5a5,4.6 0 1 1 -0.5,5.5" fill="none" stroke="#cfcfcf" stroke-width="1.7"/><path d="M1,2l5.5,0.5l-4,4z" fill="#cfcfcf"/><rect x="1" y="13" width="12" height="1.3" fill="#cfcfcf"/></svg>
<svg class="abs" style="left:902px;top:297px" width="10" height="6" viewBox="0 0 10 6" ><path d="M0,6l3.5,-4l2,2l1.5,-2l3,4z" fill="#cfcfcf"/></svg>
<div class="abs" style="left:921px;top:297px;width:92px;height:4px;background:#222;border-bottom:1px solid #5a5a5a"></div>
<svg class="abs" style="left:944px;top:294px" width="8" height="10" viewBox="0 0 8 10" ><path d="M4,0l3.5,3.5v6h-7v-6z" fill="#8a8a8a" stroke="#2a2a2a" stroke-width="0.8"/></svg>
<svg class="abs" style="left:1021px;top:294px" width="19" height="9" viewBox="0 0 19 9" ><path d="M0,9l6,-7l3,3.5l3.5,-5.5l6.5,9z" fill="#cfcfcf"/></svg>
</div>

<div class="abs" style="left:1059px;top:40px;width:381px;height:12px;background:#2d2d2d"></div>
<svg class="abs" style="left:1083px;top:43px" width="8" height="6" viewBox="0 0 8 6"><path d="M3.2,0.6l-2.6,2.4l2.6,2.4 M7.2,0.6l-2.6,2.4l2.6,2.4" fill="none" stroke="#c4c4c4" stroke-width="1.600"/></svg>
<svg class="abs" style="left:1386px;top:43px" width="8" height="6" viewBox="0 0 8 6"><path d="M0.6,0.6l2.6,2.4l-2.6,2.4 M4.600,0.6l2.6,2.4l-2.6,2.4" fill="none" stroke="#c4c4c4" stroke-width="1.600"/></svg>
<svg class="abs" style="left:1427px;top:43px" width="8" height="6" viewBox="0 0 8 6"><path d="M0.6,0.6l2.6,2.4l-2.6,2.4 M4.600,0.6l2.6,2.4l-2.6,2.4" fill="none" stroke="#c4c4c4" stroke-width="1.600"/></svg>
<div class="abs" style="left:1056px;top:40px;width:3px;height:819px;background:#262626"></div>
<div class="abs" style="left:1059px;top:52px;width:38px;height:807px;background:#474747"></div>
<div class="abs" style="left:1059px;top:119px;width:38px;height:2px;background:#2a2a2a;border-bottom:0"></div>
<div class="abs" style="left:1059px;top:216px;width:38px;height:2px;background:#2a2a2a;border-bottom:0"></div>
<div class="abs" style="left:1059px;top:256px;width:38px;height:2px;background:#2a2a2a;border-bottom:0"></div>
<div class="abs" style="left:1068px;top:55px;width:20px;height:4px;background:repeating-linear-gradient(90deg,#1c1c1c 0 1px,transparent 1px 2px)"></div>
<div class="abs" style="left:1068px;top:124px;width:20px;height:4px;background:repeating-linear-gradient(90deg,#1c1c1c 0 1px,transparent 1px 2px)"></div>
<div class="abs" style="left:1068px;top:221px;width:20px;height:4px;background:repeating-linear-gradient(90deg,#1c1c1c 0 1px,transparent 1px 2px)"></div>
<svg class="abs" style="left:1068px;top:66px" width="21" height="18" viewBox="0 0 21 18"><path d="M1,10C1,4 6,1 12,1C17,1 20.5,4 20.5,8.5C20.5,14 15,17.5 10,17.5C4.5,17.5 1,14.5 1,10Z" fill="#cfcfcf"/><path d="M1,8.5C3,6.5 6,7 8,7C9,6 8.5,3.5 9.5,1.2L1,2z" fill="#474747"/><circle cx="5.2" cy="10.5" r="1.7" fill="#666"/><circle cx="9.5" cy="13.5" r="1.6" fill="#666"/><circle cx="14" cy="13" r="1.6" fill="#666"/><circle cx="17" cy="9.5" r="1.6" fill="#666"/><circle cx="15" cy="5.5" r="1.4" fill="#666"/></svg>
<svg class="abs" style="left:1069px;top:97px" width="19" height="13" viewBox="0 0 19 13"><rect x="0" y="0" width="19" height="13" fill="#cfcfcf"/><rect x="1.5" y="1.5" width="4.5" height="4" fill="#1c1c1c"/><rect x="7.3" y="1.5" width="4.5" height="4" fill="#555"/><rect x="13" y="1.5" width="4.5" height="4" fill="#999"/><rect x="1.5" y="7" width="4.5" height="4.5" fill="#555"/><rect x="7.3" y="7" width="4.5" height="4.5" fill="#777"/><rect x="13" y="7" width="4.5" height="4.5" fill="#444"/></svg>
<svg class="abs" style="left:1071px;top:137px" width="16" height="15" viewBox="0 0 16 15"><rect x="0" y="0" width="1.6" height="15" fill="#cfcfcf"/><rect x="3" y="1.5" width="9" height="4.5" fill="#cfcfcf"/><rect x="3" y="8.5" width="12.5" height="4.5" fill="#cfcfcf"/></svg>
<svg class="abs" style="left:1069px;top:163px" width="19" height="19" viewBox="0 0 19 19"><circle cx="9.5" cy="9.5" r="8.7" fill="#cfcfcf"/><circle cx="9.5" cy="5" r="1.7" fill="#474747"/><rect x="8" y="8" width="3.2" height="7.5" fill="#474747"/></svg>
<svg class="abs" style="left:1070px;top:192px" width="17" height="17" viewBox="0 0 17 17"><rect x="2" y="2" width="13" height="13" fill="none" stroke="#cfcfcf" stroke-width="1.2"/><rect x="0.5" y="0.5" width="4" height="4" fill="#474747" stroke="#cfcfcf" stroke-width="1"/><rect x="0.5" y="6.5" width="4" height="4" fill="#474747" stroke="#cfcfcf" stroke-width="1"/><rect x="0.5" y="12.5" width="4" height="4" fill="#474747" stroke="#cfcfcf" stroke-width="1"/><rect x="6.5" y="0.5" width="4" height="4" fill="#474747" stroke="#cfcfcf" stroke-width="1"/><rect x="6.5" y="12.5" width="4" height="4" fill="#474747" stroke="#cfcfcf" stroke-width="1"/><rect x="12.5" y="0.5" width="4" height="4" fill="#474747" stroke="#cfcfcf" stroke-width="1"/><rect x="12.5" y="6.5" width="4" height="4" fill="#474747" stroke="#cfcfcf" stroke-width="1"/><rect x="12.5" y="12.5" width="4" height="4" fill="#474747" stroke="#cfcfcf" stroke-width="1"/><rect x="7.5" y="7.5" width="2" height="2" fill="#cfcfcf"/></svg>
<svg class="abs" style="left:1069px;top:231px" width="19" height="20" viewBox="0 0 19 20"><circle cx="4.5" cy="15" r="4" fill="#cfcfcf"/><circle cx="11.5" cy="9.5" r="2.8" fill="#cfcfcf"/><circle cx="14.5" cy="3.5" r="2.2" fill="#cfcfcf"/></svg>
<div class="abs" style="left:1097px;top:52px;width:2px;height:807px;background:#262626"></div>
<div id="props" class="abs" style="left:1099px;top:52px;width:300px;height:807px;background:#474747">
<div class="abs" style="left:0;top:0;width:300px;height:17px;background:#2d2d2d;border-bottom:1px solid #262626"></div>
<div class="abs" style="left:0;top:0;width:36px;height:17px;background:#474747;color:#ededed;font-size:11px;font-weight:bold;line-height:16px;padding-left:7px">属性</div>
<div class="abs" style="left:37px;top:0;width:32px;height:16px;background:#3a3a3a;color:#9a9a9a;font-size:11px;font-weight:bold;line-height:16px;padding-left:7px">库</div>
<div class="abs menuic" style="left:283px;top:5px"></div>
<div class="lbl " style="left:73px;top:28px;">帧</div>
<svg class="abs" style="left:28px;top:40px" width="18" height="19" viewBox="0 0 18 19"><rect x="1" y="2" width="16" height="14" fill="none" stroke="#cfcfcf" stroke-width="1.2"/><path d="M9,0v19" stroke="#cfcfcf" stroke-width="1.4"/><rect x="2.5" y="3.5" width="5" height="11" fill="#8a8a8a"/><rect x="10.5" y="3.5" width="5" height="11" fill="#8a8a8a"/><rect x="4" y="12" width="2" height="2" fill="#cfcfcf"/><rect x="12" y="12" width="2" height="2" fill="#cfcfcf"/></svg>
<svg class="abs" style="left:278px;top:27px" width="16" height="16" viewBox="0 0 16 16"><circle cx="8" cy="8" r="6.8" fill="none" stroke="#cfcfcf" stroke-width="1.7"/><path d="M5.5,10.5l4.5,-4.5M6.5,5.2h4.3v4.3" fill="none" stroke="#cfcfcf" stroke-width="1.7"/></svg>
<div class="hline" style="top:80px"></div>
<div class="sect" style="top:82px"></div>
<div class="abs tri-d" style="left:5px;top:90px;border-top-color:#d8d8d8;border-left-width:4.5px;border-right-width:4.5px"></div>
<div class="lbl " style="left:20px;top:85px;font-size:12px">标签</div>
<div class="lbl " style="left:37px;top:110px;">名称:</div>
<div class="abs" style="left:72px;top:108px;width:197px;height:17px;background:#a2a2a2;border:1px solid #1e1e1e"></div>
<div class="lbl " style="left:37px;top:136px;">类型:</div>
<div class="dd off" style="left:72px;top:134px;width:197px;height:18px"><span class="t">名称</span><span class="sep"></span><span class="ar"></span></div>
<div class="hline" style="top:160px"></div>
<div class="sect" style="top:162px"></div>
<div class="abs tri-d" style="left:5px;top:170px;border-top-color:#d8d8d8;border-left-width:4.5px;border-right-width:4.5px"></div>
<div class="lbl " style="left:20px;top:165px;font-size:12px">补间</div>
<div class="lbl " style="left:47px;top:195px;">缓动:</div>
<div class="dd" style="left:82px;top:193px;width:141px;height:18px"><span class="t">所有属性一起</span><span class="sep"></span><span class="ar"></span></div>
<div class="dd" style="left:82px;top:223px;width:117px;height:17px"><span class="t" style="font-size:11.5px;color:#dcdcdc">Classic Ease</span></div>
<svg class="abs" style="left:205px;top:224px" width="15" height="14" viewBox="0 0 15 14"><path d="M1,13l1,-4l7,-7l3,3l-7,7z" fill="#cfcfcf"/><path d="M10,1l1.5,-1l3,3l-1,1.5z" fill="#cfcfcf"/></svg>
<div class="lbl " style="left:232px;top:225px;color:#e8a000;border-bottom:1px dotted #e8a000;font-size:11px;line-height:13px">0</div>
<div class="hline" style="top:249px"></div>
<div class="lbl " style="left:51px;top:258px;">旋转:</div>
<div class="dd" style="left:82px;top:256px;width:138px;height:18px"><span class="t">顺时针</span><span class="sep"></span><span class="ar"></span></div>
<div class="lbl " style="left:232px;top:259px;font-size:11px;color:#cfcfcf">x</div>
<div class="lbl " style="left:253px;top:258px;color:#e8a000;border-bottom:1px dotted #e8a000;font-size:11px;line-height:13px">0</div>
<div class="hline" style="top:279px"></div>
<div class="cb" style="left:25px;top:290px;"></div>
<svg class="abs" style="left:26px;top:288px" width="12" height="12" viewBox="0 0 12 12"><path d="M1.5,6.5l3,3.5l6,-9" fill="none" stroke="#f0f0f0" stroke-width="1.7"/></svg>
<div class="lbl " style="left:40px;top:288px;">贴紧</div>
<div class="cb" style="left:177px;top:290px;"></div>
<div class="lbl " style="left:192px;top:288px;">调整到路径</div>
<div class="cb" style="left:25px;top:312px;"></div>
<div class="lbl " style="left:40px;top:311px;">沿路径着色</div>
<div class="cb" style="left:177px;top:311px;"></div>
<div class="lbl " style="left:192px;top:310px;">沿路径缩放</div>
<div class="cb" style="left:25px;top:333px;"></div>
<div class="lbl " style="left:40px;top:332px;">同步</div>
<div class="cb" style="left:177px;top:333px;opacity:.45;"></div>
<svg class="abs" style="left:178px;top:331px" width="12" height="12" viewBox="0 0 12 12"><path d="M1.5,6.5l3,3.5l6,-9" fill="none" stroke="#8a8a8a" stroke-width="1.7"/></svg>
<div class="lbl dim" style="left:192px;top:332px;">缩放</div>
<div class="hline" style="top:365px"></div>
<div class="sect" style="top:367px"></div>
<div class="abs tri-d" style="left:5px;top:375px;border-top-color:#d8d8d8;border-left-width:4.5px;border-right-width:4.5px"></div>
<div class="lbl " style="left:20px;top:370px;font-size:12px">声音</div>
<div class="lbl " style="left:39px;top:396px;">名称:</div>
<div class="dd" style="left:74px;top:394px;width:195px;height:18px"><span class="t">无</span><span class="sep"></span><span class="ar"></span></div>
<div class="hline" style="top:415px"></div>
<div class="lbl " style="left:39px;top:422px;">效果:</div>
<div class="dd off" style="left:74px;top:420px;width:164px;height:18px"><span class="t">无</span><span class="sep"></span><span class="ar"></span></div>
<svg class="abs" style="left:251px;top:422px" width="15" height="14" viewBox="0 0 15 14"><path d="M1,13l1,-4l7,-7l3,3l-7,7z" fill="#6a6a6a"/><path d="M10,1l1.5,-1l3,3l-1,1.5z" fill="#6a6a6a"/></svg>
<div class="hline" style="top:443px"></div>
<div class="lbl " style="left:39px;top:451px;">同步:</div>
<div class="dd off" style="left:74px;top:449px;width:195px;height:18px"><span class="t">事件</span><span class="sep"></span><span class="ar"></span></div>
<div class="dd off" style="left:74px;top:472px;width:133px;height:18px"><span class="t">重复</span><span class="sep"></span><span class="ar"></span></div>
<div class="lbl " style="left:217px;top:476px;font-size:11px;color:#cfcfcf">x</div>
<div class="lbl " style="left:233px;top:475px;color:#6e6e6e;border-bottom:1px dotted #6e6e6e;font-size:11px;line-height:13px">1</div>
<div class="hline" style="top:497px"></div>
<div class="lbl " style="left:73px;top:502px;font-size:12.5px">没有选择声音</div>
</div>
<div class="abs" style="left:1399px;top:52px;width:3px;height:807px;background:#262626"></div>

<div id="tools" class="abs" style="left:1402px;top:52px;width:38px;height:807px;background:#474747">
<div class="abs" style="left:0;top:0;width:38px;height:17px;background:linear-gradient(#3c3c3c,#383838);border-bottom:1px solid #2a2a2a"></div>
<div class="abs menuic" style="left:21px;top:5px"></div>
<div class="abs" style="left:3px;top:22px;width:30px;height:24px;background:#2c2c2c;border:1px solid #161616;box-shadow:0 0 0 1px #555"></div>
<svg class="abs" style="left:12.0px;top:25.0px" width="12" height="18" viewBox="0 0 12 18"><path d="M1,1v13l3.2,-3l2.3,5.5l2,-0.9l-2.3,-5.3h4.3z" fill="#2c2c2c" stroke="#e8e8e8" stroke-width="1.2" stroke-linejoin="miter"/></svg>
<svg class="abs" style="left:12.0px;top:53.0px" width="12" height="18" viewBox="0 0 12 18"><path d="M1,1v13l3.2,-3l2.3,5.5l2,-0.9l-2.3,-5.3h4.3z" fill="#cfcfcf"/></svg>
<svg class="abs" style="left:8.0px;top:82.5px" width="20" height="15" viewBox="0 0 20 15"><path d="M0,0v11l7,-5.5z" fill="#cfcfcf"/><rect x="6" y="2" width="12" height="11" fill="none" stroke="#cfcfcf" stroke-width="1.2" stroke-dasharray="2 1.6"/><rect x="4.7" y="0.7" width="2.6" height="2.6" fill="#cfcfcf"/><rect x="4.7" y="11.7" width="2.6" height="2.6" fill="#cfcfcf"/><rect x="10.7" y="0.7" width="2.6" height="2.6" fill="#cfcfcf"/><rect x="10.7" y="11.7" width="2.6" height="2.6" fill="#cfcfcf"/><rect x="16.7" y="0.7" width="2.6" height="2.6" fill="#cfcfcf"/><rect x="16.7" y="11.7" width="2.6" height="2.6" fill="#cfcfcf"/></svg>
<svg class="abs" style="left:32px;top:98px" width="4" height="4" viewBox="0 0 4 4"><path d="M4,0v4h-4z" fill="#bdbdbd"/></svg>
<svg class="abs" style="left:10.0px;top:109.5px" width="16" height="17" viewBox="0 0 16 17"><circle cx="8" cy="8.5" r="7" fill="#6a6a6a"/><ellipse cx="8" cy="8.5" rx="3" ry="7" fill="none" stroke="#5a5a5a" stroke-width="1"/><path d="M1,8.5q7,4 14,0" fill="none" stroke="#5a5a5a" stroke-width="1"/></svg>
<svg class="abs" style="left:32px;top:126px" width="4" height="4" viewBox="0 0 4 4"><path d="M4,0v4h-4z" fill="#bdbdbd"/></svg>
<svg class="abs" style="left:9.0px;top:139.5px" width="18" height="15" viewBox="0 0 18 15"><ellipse cx="10" cy="5.5" rx="7.2" ry="4.6" fill="none" stroke="#cfcfcf" stroke-width="1.5" transform="rotate(-8 10 5.5)"/><path d="M3.5,8q-2,2 0,3.5q2,1 1,3" fill="none" stroke="#cfcfcf" stroke-width="1.3"/><circle cx="3.6" cy="8.6" r="1.4" fill="none" stroke="#cfcfcf" stroke-width="1"/></svg>
<svg class="abs" style="left:32px;top:155px" width="4" height="4" viewBox="0 0 4 4"><path d="M4,0v4h-4z" fill="#bdbdbd"/></svg>
<div class="abs" style="left:3px;top:161px;width:32px;height:1px;background:#2c2c2c;border-bottom:1px solid #5a5a5a;height:2px"></div>
<svg class="abs" style="left:9.0px;top:169.0px" width="18" height="18" viewBox="0 0 18 18"><path d="M1,17l2,-8l7,-5l5,5l-5,7z" fill="#cfcfcf"/><path d="M11,3l2.5,-2.5l4,4l-2.5,2.5z" fill="#cfcfcf"/><path d="M1,17l6,-6" stroke="#474747" stroke-width="1.2"/><circle cx="7.5" cy="10.5" r="1.3" fill="#474747"/></svg>
<svg class="abs" style="left:32px;top:186px" width="4" height="4" viewBox="0 0 4 4"><path d="M4,0v4h-4z" fill="#bdbdbd"/></svg>
<div class="abs" style="left:10px;top:195px;width:16px;font-family:'Liberation Serif',serif;font-size:20px;line-height:22px;color:#cfcfcf;text-align:center">T</div>
<svg class="abs" style="left:11.0px;top:227.0px" width="14" height="14" viewBox="0 0 14 14"><path d="M0.5,13.5l13,-13" stroke="#cfcfcf" stroke-width="1.4"/></svg>
<svg class="abs" style="left:10.5px;top:256.0px" width="15" height="12" viewBox="0 0 15 12"><rect x="0.7" y="0.7" width="13.6" height="10.6" fill="#8e8e8e" stroke="#cfcfcf" stroke-width="1.4"/></svg>
<svg class="abs" style="left:32px;top:270px" width="4" height="4" viewBox="0 0 4 4"><path d="M4,0v4h-4z" fill="#bdbdbd"/></svg>
<svg class="abs" style="left:9.5px;top:284.0px" width="17" height="12" viewBox="0 0 17 12"><ellipse cx="8.5" cy="6" rx="7.6" ry="5.2" fill="#8e8e8e" stroke="#cfcfcf" stroke-width="1.5"/></svg>
<svg class="abs" style="left:32px;top:298px" width="4" height="4" viewBox="0 0 4 4"><path d="M4,0v4h-4z" fill="#bdbdbd"/></svg>
<svg class="abs" style="left:10.0px;top:310.0px" width="16" height="14" viewBox="0 0 16 14"><path d="M4.3,0.8h7.4l3.6,6.2l-3.6,6.2h-7.4l-3.6,-6.2z" fill="#8e8e8e" stroke="#cfcfcf" stroke-width="1.4"/></svg>
<svg class="abs" style="left:10.0px;top:338.0px" width="16" height="16" viewBox="0 0 16 16"><path d="M0.5,15.5l1.5,-5l3.5,3.5z" fill="#8e8e8e"/><path d="M3,9.5l7,-7l3.5,3.5l-7,7z" fill="#cfcfcf"/><path d="M11,1.5l1,-1q1,-0.5 2,0.5l1,1q1,1 0,2l-1,1z" fill="#cfcfcf"/></svg>
<svg class="abs" style="left:8.0px;top:365.5px" width="20" height="15" viewBox="0 0 20 15"><path d="M9,10l9,-9.5l1.5,1.5l-8.5,10z" fill="#cfcfcf"/><path d="M5.5,14.5q-3,0.5 -4,-1.5q2,0 2.5,-2.5q1.5,-2 4,-0.5q1.5,2 -2.5,4.5z" fill="#cfcfcf"/><path d="M1,8q0,-5 5,-6" fill="none" stroke="#cfcfcf" stroke-width="1.4"/></svg>
<svg class="abs" style="left:9.0px;top:394.5px" width="18" height="15" viewBox="0 0 18 15"><path d="M7,9.5l9,-9l1.5,1.5l-8.5,9.5z" fill="#cfcfcf"/><path d="M0.5,14q3,0 4,-3q1.5,-2 3.5,-0.5q1.5,2 -1,3.5q-3,1.5 -6.5,0z" fill="#cfcfcf"/></svg>
<div class="abs" style="left:3px;top:417px;width:32px;height:1px;background:#2c2c2c;border-bottom:1px solid #5a5a5a;height:2px"></div>
<svg class="abs" style="left:9.0px;top:425.0px" width="18" height="18" viewBox="0 0 18 18"><path d="M3,15l12,-12" stroke="#cfcfcf" stroke-width="3.4" stroke-linecap="round"/><circle cx="3" cy="12.5" r="2.3" fill="#cfcfcf"/><circle cx="5.5" cy="15" r="2.3" fill="#cfcfcf"/><circle cx="12.5" cy="3" r="2.3" fill="#cfcfcf"/><circle cx="15" cy="5.5" r="2.3" fill="#cfcfcf"/></svg>
<svg class="abs" style="left:32px;top:442px" width="4" height="4" viewBox="0 0 4 4"><path d="M4,0v4h-4z" fill="#bdbdbd"/></svg>
<svg class="abs" style="left:9.0px;top:453.0px" width="18" height="18" viewBox="0 0 18 18"><path d="M2,8.5l8,-3.5l4,9l-8,3.5q-3,0 -4,-3z" fill="#cfcfcf"/><path d="M5,6V3.5a2.5,2.5 0 0 1 5,0V9" fill="none" stroke="#cfcfcf" stroke-width="1.4"/><path d="M13.5,9q3,1 3,4.5q-0.8,1.8 -1.6,0q0,-2.5 -2.5,-3.5z" fill="#cfcfcf"/></svg>
<svg class="abs" style="left:8.0px;top:481.5px" width="20" height="17" viewBox="0 0 20 17"><path d="M0.5,6.5l7,-3l3,7l-7,3q-2.5,0 -3,-2.5z" fill="#cfcfcf"/><path d="M3,4.5V3a2,2 0 0 1 4,0V7" fill="none" stroke="#cfcfcf" stroke-width="1.3"/><path d="M11,9.5h7v6h-9v-3" fill="none" stroke="#cfcfcf" stroke-width="1.6"/></svg>
<svg class="abs" style="left:10.0px;top:509.5px" width="16" height="17" viewBox="0 0 16 17"><path d="M1,16l1,-3.5l7,-7l2.5,2.5l-7,7z" fill="none" stroke="#cfcfcf" stroke-width="1.3"/><path d="M8.5,3.5l4,4" stroke="#cfcfcf" stroke-width="2.2"/><path d="M10.5,5.5l2.2,-3.3q1.3,-1.3 2.4,-0.2q1,1.2 -0.3,2.4z" fill="#cfcfcf"/></svg>
<svg class="abs" style="left:8.5px;top:540.0px" width="19" height="12" viewBox="0 0 19 12"><path d="M5,1h13.5l-5,6.5h-13z" fill="#cfcfcf"/><path d="M0.5,8.5h13v3h-13z M14.5,8l4.5,-6v3l-4.5,6z" fill="#9a9a9a"/></svg>
<svg class="abs" style="left:8.0px;top:565.5px" width="20" height="17" viewBox="0 0 20 17"><path d="M2,15q3,-2 5,-6q1,-4 2.5,-7q1,3 0.5,6q3,-3 6,-1q-4,1 -3,4q2,3 5,0q0,4 -4,4q-3.5,-0.5 -4,-4q-2,4 -8,4z" fill="#cfcfcf"/><circle cx="6.5" cy="9.5" r="2" fill="#474747" stroke="#cfcfcf" stroke-width="1"/><path d="M1,15l12,-10" stroke="#cfcfcf" stroke-width="0.8"/><circle cx="1.5" cy="14.5" r="1.3" fill="#cfcfcf"/><circle cx="12.5" cy="5" r="1.3" fill="#cfcfcf"/></svg>
<div class="abs" style="left:3px;top:589px;width:32px;height:1px;background:#2c2c2c;border-bottom:1px solid #5a5a5a;height:2px"></div>
<svg class="abs" style="left:8.5px;top:600.5px" width="19" height="11" viewBox="0 0 19 11"><rect x="0" y="0.5" width="12.5" height="10" rx="2" fill="#6a6a6a"/><path d="M12.5,5.5l6,-4.5v9z" fill="#6a6a6a"/></svg>
<svg class="abs" style="left:10.5px;top:625.5px" width="16" height="18" viewBox="0 0 16 18"><path d="M5,17.500C3,14.500 1.500,12 0.800,10.500C0.300,9.300 1.600,8.400 2.600,9.300L4.200,11.500V3.400C4.200,2.100 6.200,2.100 6.200,3.400V8.500H6.900V1.800C6.900,0.500 8.900,0.500 8.900,1.800V8.500H9.600V2.600C9.600,1.300 11.600,1.300 11.600,2.600V9H12.300V4.800C12.300,3.500 14.300,3.500 14.300,4.800V12.500C14.300,15 13.300,16.500 12.800,17.500Z" fill="#cfcfcf"/></svg>
<svg class="abs" style="left:32px;top:642px" width="4" height="4" viewBox="0 0 4 4"><path d="M4,0v4h-4z" fill="#bdbdbd"/></svg>
<svg class="abs" style="left:9.0px;top:653.5px" width="18" height="17" viewBox="0 0 18 17"><circle cx="7" cy="7" r="5.5" fill="#8e8e8e" stroke="#cfcfcf" stroke-width="1.8"/><path d="M11,11l5.5,5" stroke="#cfcfcf" stroke-width="3" stroke-linecap="round"/></svg>
<div class="abs" style="left:3px;top:681px;width:32px;height:1px;background:#2c2c2c;border-bottom:1px solid #5a5a5a;height:2px"></div>
<svg class="abs" style="left:10.5px;top:688.5px" width="15" height="15" viewBox="0 0 15 15"><path d="M0.5,14.5l1.5,-4.5l3,3z" fill="#8e8e8e"/><path d="M3,9l6.5,-6.5l3,3l-6.5,6.5z" fill="#cfcfcf"/><path d="M10.5,1.5l1,-1q1,-0.4 1.8,0.4l0.8,0.8q0.8,0.9 0,1.8l-1,1z" fill="#cfcfcf"/></svg>
<div class="abs" style="left:8px;top:709px;width:21px;height:21px;background:#000;border:1px solid #2a2a2a"></div>
<div class="abs" style="left:8px;top:738px;width:21px;height:19px;background:#2c2c2c;border:1px solid #161616"></div>
<svg class="abs" style="left:11.5px;top:740.5px" width="13" height="13" viewBox="0 0 13 13"><path d="M1,6.5l6,-2.8l3,6.8l-6,2.8q-2,0 -3,-2.3z" fill="#cfcfcf"/><path d="M3.5,4.5V2.5a2,2 0 0 1 4,0V6.5" fill="none" stroke="#cfcfcf" stroke-width="1.2"/><path d="M10,6.5q2.5,1 2.5,4q-0.7,1.5 -1.4,0q0,-2 -2,-3z" fill="#cfcfcf"/></svg>
<div class="abs" style="left:8px;top:759px;width:21px;height:21px;background:#e0a890;border:1px solid #2a2a2a"></div>
<svg class="abs" style="left:4.0px;top:787.0px" width="12" height="12" viewBox="0 0 12 12"><rect x="0.6" y="0.6" width="7.5" height="7.5" fill="#e8e8e8" stroke="#111" stroke-width="1.2"/><rect x="3.9" y="3.9" width="7.5" height="7.5" fill="#111" stroke="#e8e8e8" stroke-width="1.2"/></svg>
<svg class="abs" style="left:18.5px;top:786.5px" width="13" height="13" viewBox="0 0 13 13"><rect x="0.5" y="0.5" width="4" height="4" fill="#111" stroke="#e8e8e8" stroke-width="1"/><rect x="0.5" y="7.5" width="4" height="4" fill="#e8e8e8"/><path d="M7,3q4,0 4,5" fill="none" stroke="#cfcfcf" stroke-width="1.5"/><path d="M8.5,8h5l-2.5,3.5z M8.5,0.5v5l-3,-2.5z" fill="#cfcfcf"/></svg>
</div>

<div class="abs" style="left:1177px;top:760px;width:188px;height:22px;background:#fff"></div>
<svg class="abs" style="left:1158px;top:754px" width="31" height="31" viewBox="0 0 31 31"><defs><linearGradient id="sg" x1="0" y1="0" x2="0" y2="1"><stop offset="0" stop-color="#f4642a"/><stop offset="1" stop-color="#e63e14"/></linearGradient></defs><path d="M3,6.500q-0.500,-2 1.500,-2.500l18,-3.500q2,-0.300 2.500,1.500l4,19q0.300,2 -1.500,2.500l-18,5q-2,0.500 -2.500,-1.500z" fill="url(#sg)"/><path d="M22.500,9.500q-3,-2.500 -8.500,-1.500q-5,1.200 -4,4q1,2 6.500,1.500q5.500,-0.500 6,2.500q0.300,3.500 -5.500,5q-5.500,1 -9,-1" fill="none" stroke="#fff" stroke-width="3.200" stroke-linecap="round"/></svg>
<div class="abs" style="left:1192px;top:761px;font-size:16px;font-weight:bold;line-height:20px;color:#1e6fd0">中</div>
<svg class="abs" style="left:1214px;top:765px" width="14" height="14" viewBox="0 0 14 14"><circle cx="3" cy="3.500" r="1.800" fill="none" stroke="#1e6fd0" stroke-width="1.200"/><path d="M9,7.500a1.800,1.800 0 1 1 2,1.800q0,2.500 -2.500,3.500q1.500,-1.500 1,-3.500q-0.500,-0.500 -0.500,-1.800z" fill="#1e6fd0"/></svg>
<svg class="abs" style="left:1235px;top:762px" width="18" height="18" viewBox="0 0 18 18"><circle cx="9" cy="9" r="7.800" fill="none" stroke="#1e6fd0" stroke-width="1.500"/><path d="M6.500,5.500v3M11.500,5.500v3" stroke="#1e6fd0" stroke-width="1.600" stroke-linecap="round"/><path d="M5,11q4,4 8,0" fill="none" stroke="#1e6fd0" stroke-width="1.500"/></svg>
<svg class="abs" style="left:1259px;top:762px" width="14" height="18" viewBox="0 0 14 18"><rect x="4.200" y="0.500" width="5.600" height="10.500" rx="2.800" fill="#1e6fd0"/><path d="M1.500,7.500q0,6 5.500,6q5.500,0 5.500,-6M7,13.500v3M4,17h6" fill="none" stroke="#1e6fd0" stroke-width="1.400"/></svg>
<svg class="abs" style="left:1280px;top:765px" width="17" height="12" viewBox="0 0 17 12"><rect x="0.700" y="0.700" width="15.600" height="10.600" rx="1.500" fill="#1e6fd0"/><path d="M3,3.500h1.500M6,3.500h1.500M9,3.500h1.500M12,3.500h1.500M3,6h1.500M6,6h1.500M9,6h1.500M12,6h1.500M4.500,8.700h8" stroke="#fff" stroke-width="1.300"/></svg>
<svg class="abs" style="left:1303px;top:763px" width="16" height="17" viewBox="0 0 16 17"><circle cx="7.500" cy="4" r="3.300" fill="#b4bfd4"/><path d="M1,14q0,-6 6.500,-6q6,0 6.500,6z" fill="#b4bfd4"/><rect x="10.500" y="9.500" width="4" height="6" rx="0.800" fill="#fff" stroke="#b4bfd4" stroke-width="1"/></svg>
<svg class="abs" style="left:1324px;top:764px" width="16" height="14" viewBox="0 0 16 14"><path d="M5,0.500q3,2 6,0l4.500,3l-2,3l-1.500,-1v8h-8v-8l-1.500,1l-2,-3z" fill="#1e6fd0"/></svg>
<svg class="abs" style="left:1347px;top:764px" width="14" height="14" viewBox="0 0 14 14"><rect x="0" y="0" width="6" height="6" fill="#1e6fd0"/><rect x="8.600" y="0.600" width="4.800" height="4.800" fill="#fff" stroke="#1e6fd0" stroke-width="1.200"/><rect x="0" y="8" width="6" height="6" fill="#1e6fd0"/><rect x="8" y="8" width="6" height="6" fill="#1e6fd0"/></svg>

<div id="taskbar" class="abs" style="left:0;top:859px;width:1440px;height:41px;background:#0a151b">
<div class="abs" style="left:247px;top:1px;width:49px;height:40px;background:#9b5a22"></div>
<div class="abs" style="left:296px;top:1px;width:48px;height:40px;background:#3b4549"></div>
<div class="abs" style="left:55px;top:39px;width:40px;height:2px;background:#76b9ed"></div>
<div class="abs" style="left:104px;top:39px;width:40px;height:2px;background:#76b9ed"></div>
<div class="abs" style="left:153px;top:39px;width:32px;height:2px;background:#76b9ed"></div>
<div class="abs" style="left:185px;top:39px;width:8px;height:2px;background:#4a86b8"></div>
<div class="abs" style="left:202px;top:39px;width:40px;height:2px;background:#76b9ed"></div>
<div class="abs" style="left:247px;top:39px;width:49px;height:2px;background:#f47a20"></div>
<div class="abs" style="left:296px;top:39px;width:48px;height:2px;background:#76b9ed"></div>
<svg class="abs" style="left:16px;top:12px" width="17" height="17" viewBox="0 0 17 17" ><path d="M0,2.5l7,-1v7h-7z M8,1.3l9,-1.3v8.5h-9z M0,9.5h7v7l-7,-1z M8,9.5h9v8.5l-9,-1.3z" fill="#fff" transform="scale(1,0.95)"/></svg>
<svg class="abs" style="left:64px;top:9px" width="23" height="23" viewBox="0 0 23 23" ><path d="M1,11C2,4 7,0.5 12.5,0.5C19,0.5 22.5,5.5 22.5,11.5v2.5H8.5c0.3,3 3,4.7 6.5,4.7c2.5,0 4.8,-0.8 6.5,-1.8v4.6c-2,1 -4.5,1.7 -7.5,1.7C7,23.200 3,19 3,13.500C3,10 5,7 8,5.500C5,6 2.500,8 1,11z M8.500,9.500h8c0,-2.500 -1.500,-4.500 -4,-4.500c-2.300,0 -3.800,2 -4,4.500z" fill="#1e7ad8"/></svg>
<svg class="abs" style="left:112px;top:9px" width="24" height="24" viewBox="0 0 24 24" ><circle cx="12" cy="12" r="11.500" fill="#dd4b3e"/><path d="M12,12L2.100,6.200A11.500,11.500 0 0 0 7,22.400z" fill="#1da462"/><path d="M12,12L7,22.400A11.500,11.500 0 0 0 23.400,10.500H12z" fill="#ffcd40" transform="rotate(0)"/><path d="M12,12l-5,10.400a11.500,11.500 0 0 0 10.500,0z" fill="#ffcd40"/><path d="M12,12l5.500,10.200A11.500,11.500 0 0 0 23.200,9H12z" fill="#ffcd40"/><path d="M12,12L2.200,6A11.500,11.500 0 0 0 6.800,22.300z" fill="#1da462"/><path d="M2.200,6A11.500,11.500 0 0 1 23,8.500H12z" fill="#dd4b3e"/><circle cx="12" cy="12" r="5.400" fill="#fff"/><circle cx="12" cy="12" r="4.300" fill="#4c8bf5"/></svg>
<svg class="abs" style="left:161px;top:11px" width="24" height="21" viewBox="0 0 24 21" ><path d="M1,3.500q0,-1.500 1.500,-1.500h6l2,2h11q1.500,0 1.500,1.500V19H1z" fill="#e8b849"/><rect x="1" y="6" width="22" height="14" rx="1" fill="#fbd870"/><path d="M6,20v-6.500h12V20h-3.500v-3.500h-5V20z" fill="#3a96dd"/><rect x="5" y="11.500" width="14" height="2.500" fill="#57b1ee"/></svg>
<svg class="abs" style="left:210px;top:10px" width="24" height="22" viewBox="0 0 24 22" ><rect x="0.700" y="0.700" width="22.600" height="20.600" fill="#0a151b" stroke="#fff" stroke-width="1.400"/><path d="M1,21V17l8,-10l5,6.500l2.500,-3l6.500,8V21z" fill="#fff"/></svg>
<svg class="abs" style="left:259px;top:8px" width="25" height="25" viewBox="0 0 25 25" ><defs><radialGradient id="c4d" cx="0.45" cy="0.4" r="0.6"><stop offset="0" stop-color="#5a68c8"/><stop offset="0.55" stop-color="#1a2070"/><stop offset="1" stop-color="#05061c"/></radialGradient></defs><circle cx="12.500" cy="12.500" r="12" fill="#d8dce4"/><circle cx="12" cy="13.500" r="8.700" fill="url(#c4d)"/><path d="M3,8q5,-8 14,-5q-8,-1 -12,7z" fill="#fff" opacity="0.9"/><path d="M20,5q5,6 1,14q2,-7 -2,-13z" fill="#8a8e98"/></svg>
<div class="abs" style="left:309px;top:9px;width:22px;height:22px;background:#2c0806;border:1.500px solid #e8321c;color:#f0321c;font-size:14px;line-height:18px;text-align:center;letter-spacing:0">An</div>
<svg class="abs" style="left:1207px;top:16px" width="13" height="10" viewBox="0 0 13 10" ><path d="M1,9l5.500,-6.500l5.500,6.500" fill="none" stroke="#fff" stroke-width="1.400"/></svg>
<svg class="abs" style="left:1229px;top:13px" width="18" height="18" viewBox="0 0 18 18" ><path d="M1,6.500h3l4,-4v12l-4,-4h-3z" fill="none" stroke="#fff" stroke-width="1.200"/><circle cx="12.500" cy="12.500" r="4.500" fill="#e81123"/><path d="M10.700,10.700l3.600,3.600M14.300,10.700l-3.600,3.600" stroke="#fff" stroke-width="1.300"/></svg>
<div class="abs" style="left:1254px;top:13px;font-size:14px;line-height:16px;color:#fff">中</div>
<svg class="abs" style="left:1280px;top:12px" width="18" height="18" viewBox="0 0 18 18" ><path d="M1.500,3.500l13,-2.500l2.500,12l-13,3z" fill="#f0541e"/><path d="M12.500,5.500q-2,-1.500 -5,-0.800q-2.500,1 -1.500,2.800q1,1 4,0.800q2.500,0 2.800,1.700q0,2 -3,2.800q-3,0.500 -5,-0.800" fill="none" stroke="#fff" stroke-width="2"/></svg>
<div class="abs" style="left:1310px;top:5px;width:74px;text-align:center;font-size:12.500px;line-height:15px;color:#fff">9:47</div>
<div class="abs" style="left:1310px;top:23px;width:74px;text-align:center;font-size:12.500px;line-height:15px;color:#fff">2022-05-23</div>
<svg class="abs" style="left:1399px;top:12px" width="24" height="22" viewBox="0 0 24 22" ><path d="M1,1h16v12h-10l-3.500,3.500v-3.500h-2.500z" fill="#fff"/><path d="M4,4.500h10M4,7h10M4,9.500h10" stroke="#0a151b" stroke-width="1"/><circle cx="16" cy="15" r="6.600" fill="#1f2428" stroke="#b8b8b8" stroke-width="1.200"/></svg>
<div class="abs" style="left:1410px;top:21px;width:10px;text-align:center;font-size:11px;font-weight:bold;line-height:12px;color:#fff">1</div>
<div class="abs" style="left:1435px;top:1px;width:1px;height:40px;background:#3a4a50"></div>
</div>

</div>
</body>
</html>
